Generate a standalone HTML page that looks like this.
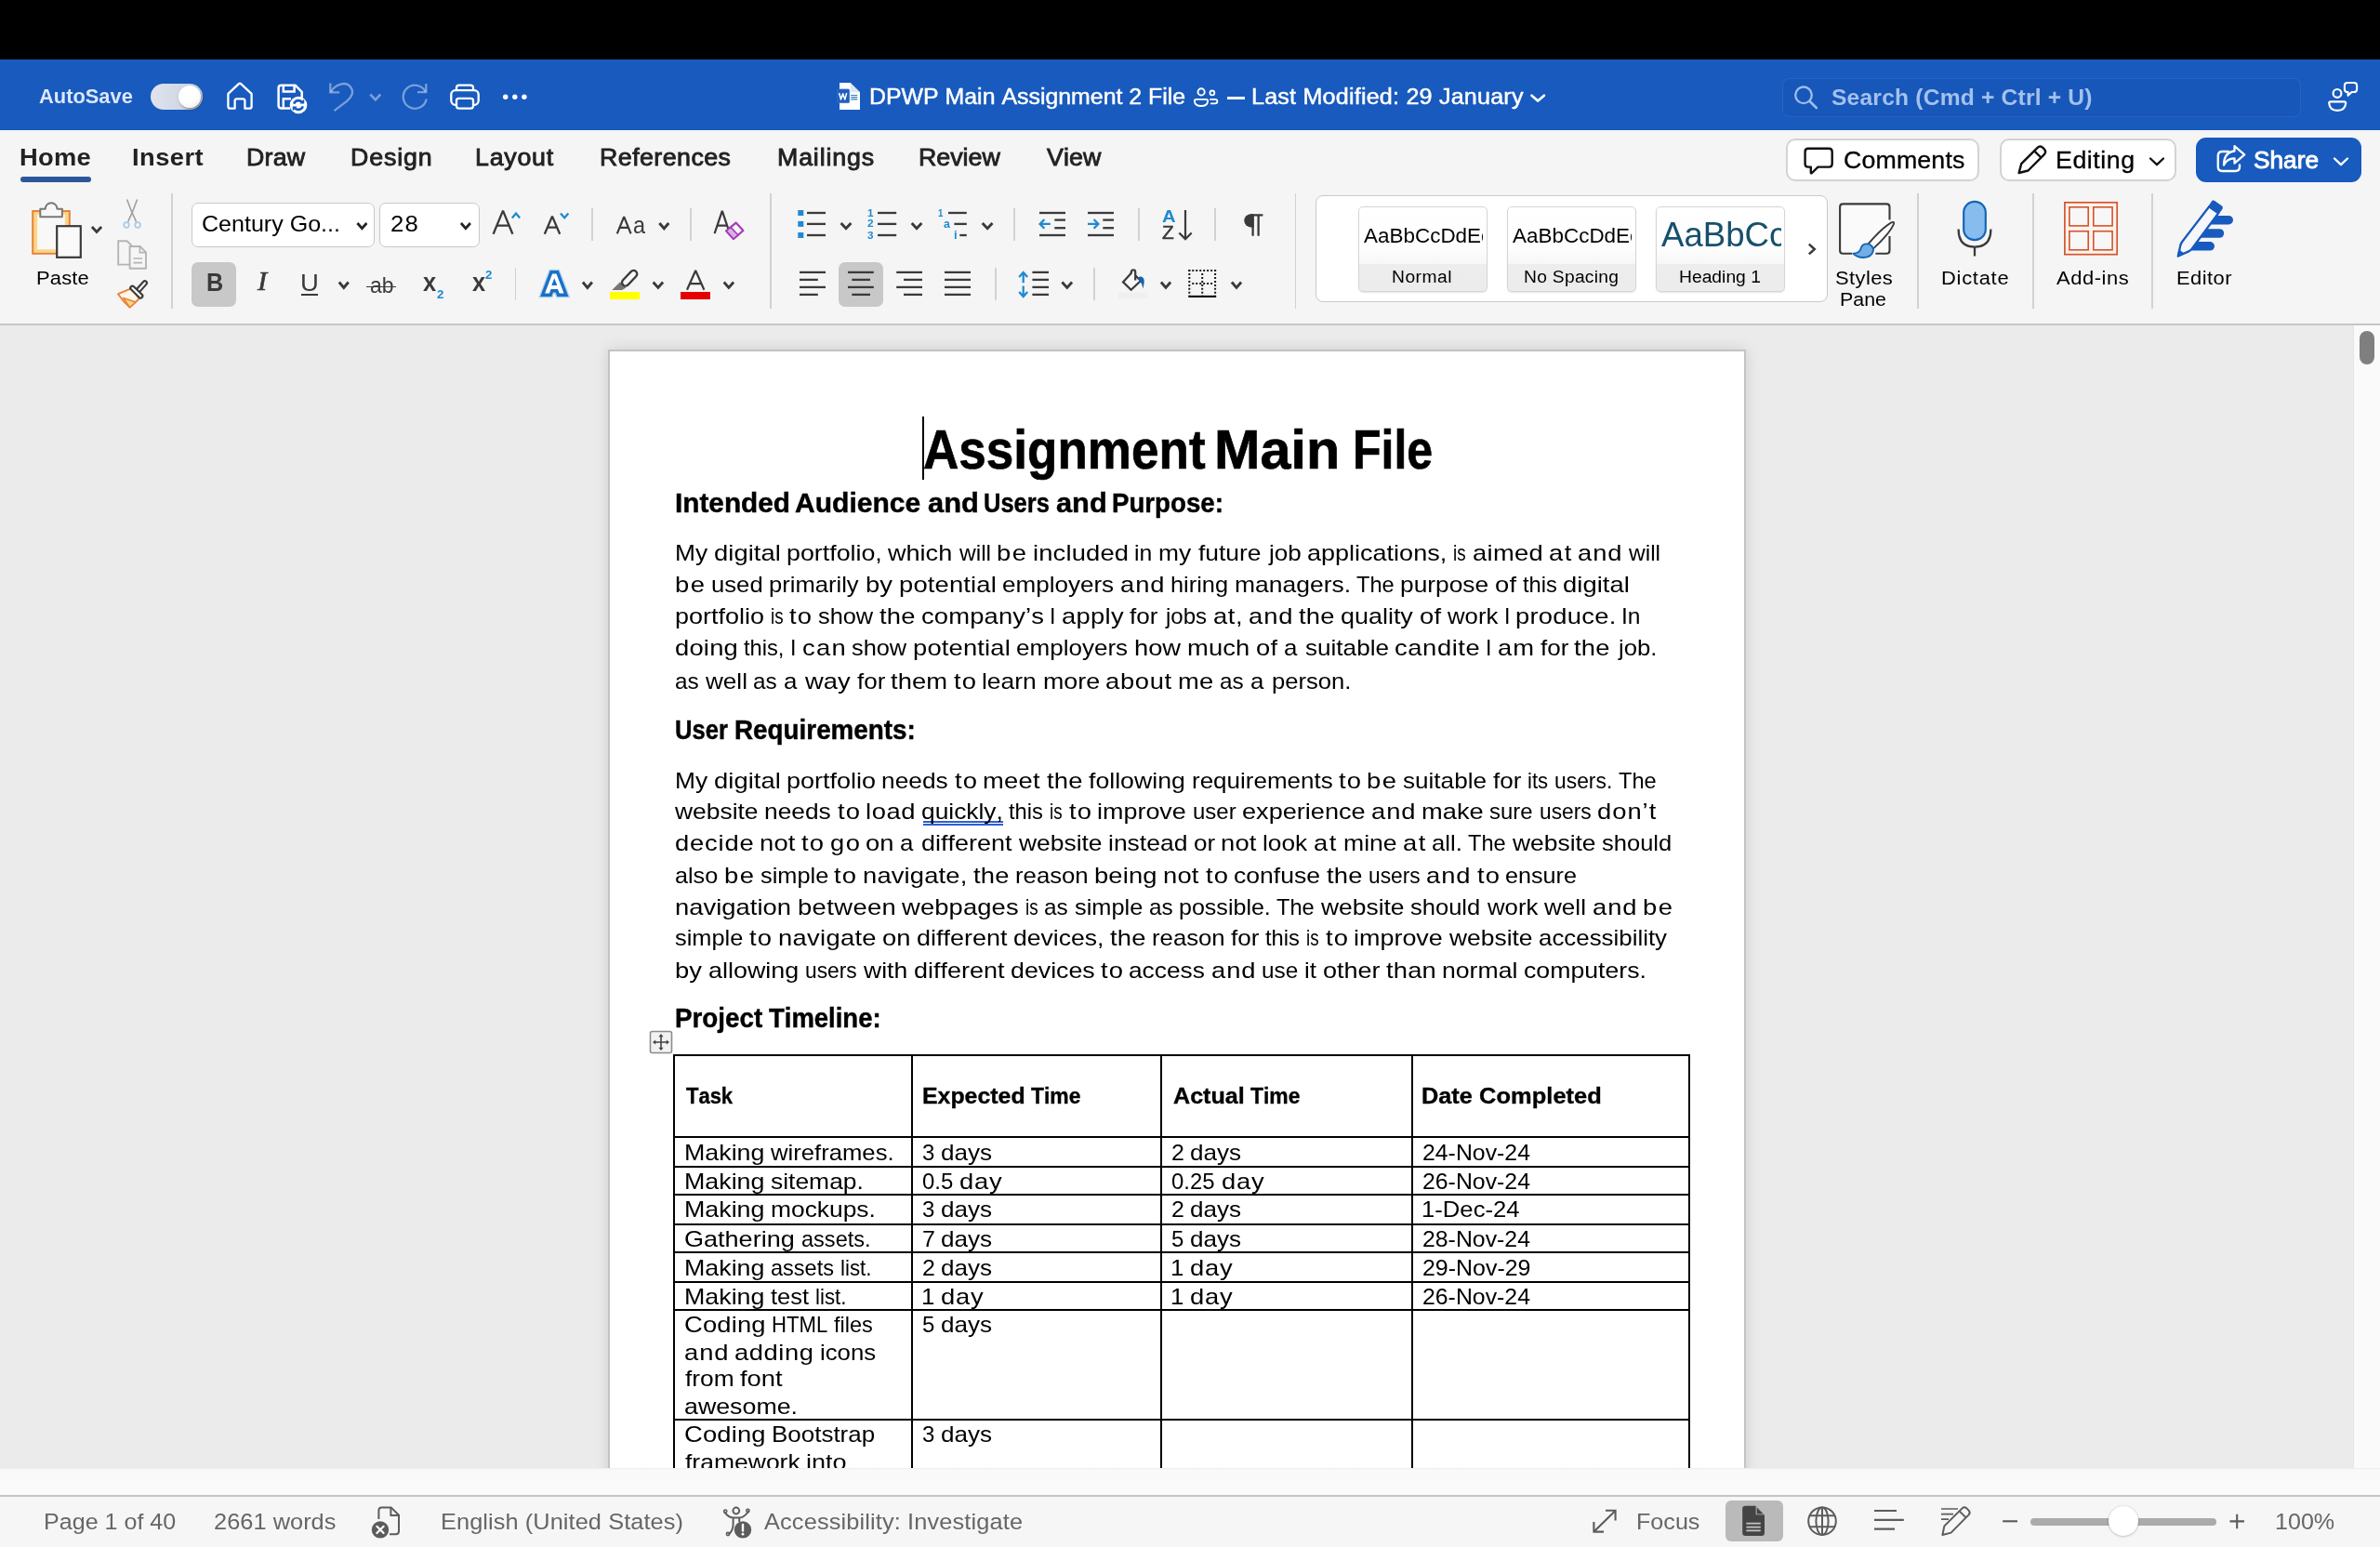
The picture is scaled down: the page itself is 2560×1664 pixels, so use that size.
<!DOCTYPE html>
<html lang="en"><head><meta charset="utf-8"><title>DPWP Main Assignment 2 File</title>
<style>
html,body{margin:0;padding:0}
body{width:2560px;height:1664px;position:relative;overflow:hidden;background:#ebebeb;font-family:"Liberation Sans",sans-serif}
svg.ov{position:absolute;left:0;top:0}
#app{position:absolute;left:0;top:0;width:2560px;height:1664px;overflow:hidden;background:#ebebeb;will-change:transform}
</style></head><body>
<div id="app">
<div style="position:absolute;left:0px;top:0px;width:2560px;height:64px;background:#000"></div>
<div style="position:absolute;left:0px;top:64px;width:2560px;height:76px;background:#185abd"></div>
<div style="position:absolute;left:0px;top:140px;width:2560px;height:208px;background:#f5f5f5"></div>
<div style="position:absolute;left:0px;top:348px;width:2560px;height:2px;background:#c6c6c6"></div>
<div style="position:absolute;left:2531px;top:350px;width:29px;height:1229px;background:#fafafa;border-left:1px solid #e4e4e4;box-sizing:border-box"></div>
<div style="position:absolute;left:2538px;top:356px;width:16px;height:36px;background:#7f7f7f;border-radius:8px"></div>
<div style="position:absolute;left:654px;top:376px;width:1224px;height:1232px;background:#fff;border:2px solid #c3c3c3;box-sizing:border-box;box-shadow:0 0 14px rgba(0,0,0,0.13)"></div>
<div style="position:absolute;left:162px;top:90px;width:56px;height:28px;border-radius:14px;background:linear-gradient(90deg,#dfe3ec,#d0d8e5 60%,#c9d2e0)"></div>
<div style="position:absolute;left:192px;top:92.3px;width:24.2px;height:24.2px;border-radius:12.1px;background:radial-gradient(circle at 35% 30%,#ffffff 45%,#ececec);box-shadow:1px 1.5px 2.5px rgba(70,50,40,0.5)"></div>
<div style="position:absolute;left:1319.6px;top:104.3px;width:19.5px;height:2.5px;background:#fff"></div>
<div style="position:absolute;left:1916.5px;top:83.5px;width:558px;height:42px;border-radius:8px;background:rgba(10,40,110,0.035);border:1px solid rgba(255,255,255,0.075);box-sizing:border-box"></div>
<div style="position:absolute;left:22px;top:190px;width:76px;height:6px;background:#2b579a;border-radius:3px"></div>
<div style="position:absolute;left:1920.5px;top:148.5px;width:208px;height:46px;background:#fff;border:2px solid #d3d3d3;border-radius:10px;box-sizing:border-box"></div>
<div style="position:absolute;left:2150.5px;top:148.5px;width:190.7px;height:46px;background:#fff;border:2px solid #d3d3d3;border-radius:10px;box-sizing:border-box"></div>
<div style="position:absolute;left:2362.2px;top:148px;width:178px;height:47.5px;background:#185abd;border-radius:11px"></div>
<div style="position:absolute;left:184.2px;top:208px;width:1.6px;height:124px;background:#d2d2d2"></div>
<div style="position:absolute;left:206.4px;top:218px;width:196.2px;height:47.5px;background:#fff;border:1.5px solid #c8c8c8;border-radius:7px;box-sizing:border-box"></div>
<div style="position:absolute;left:408.4px;top:218px;width:107.2px;height:47.5px;background:#fff;border:1.5px solid #c8c8c8;border-radius:7px;box-sizing:border-box"></div>
<div style="position:absolute;left:636.2px;top:224.4px;width:1.6px;height:34.79999999999998px;background:#d2d2d2"></div>
<div style="position:absolute;left:742.1px;top:224.4px;width:1.6px;height:34.79999999999998px;background:#d2d2d2"></div>
<div style="position:absolute;left:206.4px;top:282.4px;width:47.4px;height:47.4px;background:#c8c8c8;border-radius:7px"></div>
<div style="position:absolute;left:324px;top:315.7px;width:18px;height:2.2px;background:#3a3a3a"></div>
<div style="position:absolute;left:393.8px;top:307.6px;width:31.8px;height:1.9px;background:#3a3a3a"></div>
<div style="position:absolute;left:553.8000000000001px;top:288.2px;width:1.6px;height:35.30000000000001px;background:#d2d2d2"></div>
<div style="position:absolute;left:655.8px;top:314px;width:32.2px;height:7.8px;background:#ffff00"></div>
<div style="position:absolute;left:731.9px;top:314px;width:32px;height:7.8px;background:#e60000"></div>
<div style="position:absolute;left:828.2px;top:208px;width:1.6px;height:124px;background:#d2d2d2"></div>
<div style="position:absolute;left:1090.0px;top:224.4px;width:1.6px;height:34.79999999999998px;background:#d2d2d2"></div>
<div style="position:absolute;left:1224.1000000000001px;top:224.4px;width:1.6px;height:34.79999999999998px;background:#d2d2d2"></div>
<div style="position:absolute;left:1306.2px;top:224.4px;width:1.6px;height:34.79999999999998px;background:#d2d2d2"></div>
<div style="position:absolute;left:1392.5px;top:208px;width:1.6px;height:124px;background:#d2d2d2"></div>
<div style="position:absolute;left:902px;top:282.4px;width:48px;height:47.4px;background:#c8c8c8;border-radius:7px"></div>
<div style="position:absolute;left:1070.2px;top:288.2px;width:1.6px;height:35.30000000000001px;background:#d2d2d2"></div>
<div style="position:absolute;left:1176.2px;top:288.2px;width:1.6px;height:35.30000000000001px;background:#d2d2d2"></div>
<div style="position:absolute;left:1202.5px;top:314.8px;width:31.6px;height:6.2px;background:#efefef"></div>
<div style="position:absolute;left:1414.5px;top:210.4px;width:551px;height:114.8px;background:#fff;border:1.5px solid #c9c9c9;border-radius:8px;box-sizing:border-box"></div>
<div style="position:absolute;left:1460.5px;top:222.4px;width:139.2px;height:92px;border:1.4px solid #d6d6d6;border-radius:5px;box-sizing:border-box;overflow:hidden;background:linear-gradient(#ffffff 0,#fdfdfd 44px,#f7f7f7 61px,#ededed 61px,#ececec 100%);box-shadow:0 1px 1.5px rgba(0,0,0,0.10)"></div>
<div style="position:absolute;left:1620.5px;top:222.4px;width:139.2px;height:92px;border:1.4px solid #d6d6d6;border-radius:5px;box-sizing:border-box;overflow:hidden;background:linear-gradient(#ffffff 0,#fdfdfd 44px,#f7f7f7 61px,#ededed 61px,#ececec 100%);box-shadow:0 1px 1.5px rgba(0,0,0,0.10)"></div>
<div style="position:absolute;left:1780.5px;top:222.4px;width:139.2px;height:92px;border:1.4px solid #d6d6d6;border-radius:5px;box-sizing:border-box;overflow:hidden;background:linear-gradient(#ffffff 0,#fdfdfd 44px,#f7f7f7 61px,#ededed 61px,#ececec 100%);box-shadow:0 1px 1.5px rgba(0,0,0,0.10)"></div>
<div style="position:absolute;left:2062.2px;top:208px;width:1.6px;height:124px;background:#d2d2d2"></div>
<div style="position:absolute;left:2186.2px;top:208px;width:1.6px;height:124px;background:#d2d2d2"></div>
<div style="position:absolute;left:2314.2px;top:208px;width:1.6px;height:124px;background:#d2d2d2"></div>
<div style="position:absolute;left:992px;top:448px;width:2px;height:68px;background:#000"></div>
<div style="position:absolute;left:993px;top:883px;width:86px;height:1.5px;background:#2f5fcf"></div>
<div style="position:absolute;left:993px;top:886px;width:86px;height:1.5px;background:#2f5fcf"></div>
<div style="position:absolute;left:724px;top:1134px;width:1094px;height:2px;background:#000"></div>
<div style="position:absolute;left:724px;top:1222px;width:1094px;height:2px;background:#000"></div>
<div style="position:absolute;left:724px;top:1254px;width:1094px;height:2px;background:#000"></div>
<div style="position:absolute;left:724px;top:1284px;width:1094px;height:2px;background:#000"></div>
<div style="position:absolute;left:724px;top:1316px;width:1094px;height:2px;background:#000"></div>
<div style="position:absolute;left:724px;top:1346px;width:1094px;height:2px;background:#000"></div>
<div style="position:absolute;left:724px;top:1378px;width:1094px;height:2px;background:#000"></div>
<div style="position:absolute;left:724px;top:1408px;width:1094px;height:2px;background:#000"></div>
<div style="position:absolute;left:724px;top:1526px;width:1094px;height:2px;background:#000"></div>
<div style="position:absolute;left:724px;top:1134px;width:2px;height:446px;background:#000"></div>
<div style="position:absolute;left:980px;top:1134px;width:2px;height:446px;background:#000"></div>
<div style="position:absolute;left:1248px;top:1134px;width:2px;height:446px;background:#000"></div>
<div style="position:absolute;left:1518px;top:1134px;width:2px;height:446px;background:#000"></div>
<div style="position:absolute;left:1816px;top:1134px;width:2px;height:446px;background:#000"></div>
<svg class="ov" width="2560" height="1664" viewBox="0 0 2560 1664">
<path d="M245.4 100.9 L256.9 90.1 Q258 89.1 259.1 90.1 L270.6 100.9 V114.4 Q270.6 116.7 268.3 116.7 H263.4 V108.6 Q263.4 106.4 261.2 106.4 H254.8 Q252.6 106.4 252.6 108.6 V116.7 H247.7 Q245.4 116.7 245.4 114.4 Z" fill="none" stroke="#fff" stroke-width="2.3" stroke-linejoin="round"/>
<path d="M302.5 91.7 H317.5 L324.7 98.9 V113 M312 116.5 H302.5 Q299.6 116.5 299.6 113.6 V94.6 Q299.6 91.7 302.5 91.7" fill="none" stroke="#fff" stroke-width="2.5" stroke-linejoin="round"/><path d="M304.8 91.7 V98.6 H316.6 V91.7" fill="none" stroke="#fff" stroke-width="2.5"/><path d="M304.8 116.5 V106.2 H313" fill="none" stroke="#fff" stroke-width="2.5"/><circle cx="321" cy="113" r="9.3" fill="#fff"/><path d="M316.2 111.6 A5.2 5.2 0 0 1 325.3 110.2 M325.8 114.4 A5.2 5.2 0 0 1 316.7 115.8" fill="none" stroke="#185abd" stroke-width="2.6"/><path d="M327.2 106.6 v4.8 h-4.8z M314.8 119.4 v-4.8 h4.8z" fill="#185abd"/>
<path d="M355.3 89.5 V99.4 H365.2" fill="none" stroke="rgba(255,255,255,0.42)" stroke-width="2.3"/><path d="M355.8 98.9 C360.5 90.5 372 86.8 377 93.5 C381.5 99.5 377.5 105 373 108.8 L359.5 119.2" fill="none" stroke="rgba(255,255,255,0.42)" stroke-width="2.3"/>
<path d="M398.3 101.5 L403.8 107.3 L409.3 101.5" fill="none" stroke="rgba(255,255,255,0.42)" stroke-width="2.6"/>
<path d="M458.3 90 V99.2 H449" fill="none" stroke="rgba(255,255,255,0.42)" stroke-width="2.3"/><path d="M457.6 98.6 A12.6 12.6 0 1 0 458.7 106.5" fill="none" stroke="rgba(255,255,255,0.42)" stroke-width="2.3"/>
<path d="M491 97.2 V94.5 Q491 91.7 493.8 91.7 H506.2 Q509 91.7 509 94.5 V97.2" fill="none" stroke="#fff" stroke-width="2.3"/><rect x="485.3" y="97.2" width="29.4" height="15.6" rx="4.5" fill="none" stroke="#fff" stroke-width="2.3"/><rect x="491" y="105.8" width="18" height="10.8" rx="2.5" fill="#185abd" stroke="#fff" stroke-width="2.3"/>
<circle cx="543.7" cy="104.3" r="2.7" fill="#fff"/>
<circle cx="553.8" cy="104.3" r="2.7" fill="#fff"/>
<circle cx="563.9" cy="104.3" r="2.7" fill="#fff"/>
<path d="M903 89 H914.6 L925 99.2 V118.1 H903 Z" fill="#fff"/><path d="M914.6 89 V99.2 H925 Z" fill="#dde6f5"/><path d="M915.2 102.5 h7 M915.2 104.7 h7 M915.2 106.9 h7" stroke="#2f7fbf" stroke-width="1.2"/><rect x="900.7" y="96" width="12.9" height="14.6" rx="1.2" fill="#1f5dbe" stroke="#3a74cc" stroke-width="0.8"/><path d="M902.6 100 l1.9 7 l2.15 -6.2 l2.15 6.2 l1.9 -7" fill="none" stroke="#fff" stroke-width="1.5" stroke-linejoin="round"/>
<circle cx="1292.1" cy="98.9" r="3.6" fill="none" stroke="#fff" stroke-width="1.9"/><path d="M1286.8 106.9 H1297.2 Q1299.1 106.9 1299.1 108.8 Q1298.6 114 1292 114 Q1285.4 114 1284.9 108.8 Q1284.9 106.9 1286.8 106.9 Z" fill="none" stroke="#fff" stroke-width="1.9" stroke-linejoin="round"/><circle cx="1303.9" cy="99.9" r="2.4" fill="none" stroke="#fff" stroke-width="1.8"/><path d="M1302 106.9 H1306.8 Q1309.4 106.9 1309.4 109.1 Q1309.4 111.4 1306.8 111.4 H1302.8" fill="none" stroke="#fff" stroke-width="1.8" stroke-linecap="round"/>
<path d="M1647.5 102.7 L1654.2 108.6 L1660.9 102.7" fill="none" stroke="#fff" stroke-width="2.7" stroke-linecap="round" stroke-linejoin="round"/>
<circle cx="1940" cy="102.3" r="8.8" fill="none" stroke="#9fbdea" stroke-width="2.3"/><path d="M1946.4 108.8 L1953.8 116" stroke="#9fbdea" stroke-width="2.6" stroke-linecap="round"/>
<circle cx="2514" cy="100.4" r="4.4" fill="none" stroke="#fff" stroke-width="2.2"/><path d="M2507 109.3 H2521.4 Q2523.2 109.3 2523.2 111 Q2522.4 118.9 2514.2 118.9 Q2506 118.9 2505.2 111 Q2505.2 109.3 2507 109.3 Z" fill="none" stroke="#fff" stroke-width="2.2" stroke-linejoin="round"/><path d="M2525 89 H2532 Q2535.1 89 2535.1 92.1 V95.9 Q2535.1 99 2532 99 H2529.6 L2525.6 102.8 V99 H2525 Q2521.9 99 2521.9 95.9 V92.1 Q2521.9 89 2525 89 Z" fill="none" stroke="#fff" stroke-width="2.1" stroke-linejoin="round"/>
<path d="M1945 159.8 H1967.3 Q1970.7 159.8 1970.7 163.2 V176.2 Q1970.7 179.6 1967.3 179.6 H1955.5 L1949 186 Q1947.8 187 1947.8 185.5 V179.6 H1945 Q1941.6 179.6 1941.6 176.2 V163.2 Q1941.6 159.8 1945 159.8 Z" fill="none" stroke="#111" stroke-width="2.4" stroke-linejoin="round"/>
<path d="M2171.6 186 L2174.2 176.2 L2191.3 159.1 Q2194.4 156 2197.6 159.1 L2198.6 160.1 Q2201.7 163.2 2198.6 166.4 L2181.5 183.5 Z" fill="none" stroke="#111" stroke-width="2.4" stroke-linejoin="round"/><path d="M2188.2 162.3 L2195.4 169.5" fill="none" stroke="#111" stroke-width="2.4"/>
<path d="M2313 170.5 L2320 177.2 L2327 170.5" fill="none" stroke="#111" stroke-width="2.3" stroke-linecap="round" stroke-linejoin="round"/>
<path d="M2397 163 H2390.3 Q2385.8 163 2385.8 167.5 V179.5 Q2385.8 184 2390.3 184 H2404.5 Q2409 184 2409 179.5 V177.5" fill="none" stroke="#fff" stroke-width="2.4" stroke-linecap="round"/><path d="M2403.5 157.2 L2414.2 166.4 L2403.5 175.6 V170.3 Q2395.6 170 2392 177.5 Q2392.3 163.5 2403.5 162.5 Z" fill="none" stroke="#fff" stroke-width="2.3" stroke-linejoin="round"/>
<path d="M2511 170.5 L2518 177.2 L2525 170.5" fill="none" stroke="#fff" stroke-width="2.4" stroke-linecap="round" stroke-linejoin="round"/>
<rect x="35.2" y="227" width="39.6" height="45.8" fill="#fbd68a" stroke="#e8833a" stroke-width="2"/><rect x="40.2" y="231" width="29.6" height="37.2" fill="#f8f8f8"/><path d="M43.3 233.2 V224.8 H48.7 A6.4 6.6 0 0 1 61.5 224.8 H66.9 V233.2 Z" fill="#f7f7f7" stroke="#787878" stroke-width="2" stroke-linejoin="round"/><rect x="61.2" y="243.2" width="25.6" height="33.6" fill="#fafafa" stroke="#3a3a3a" stroke-width="2.2"/>
<path d="M98.9 244.0 L104.0 249.4 L109.1 244.0" fill="none" stroke="#3a3a3a" stroke-width="2.9" stroke-linejoin="miter"/>
<path d="M136.6 214.4 Q140.5 226 146.6 238.6 M147.6 214.4 Q143.7 226 137.6 238.6" stroke="#a0a0a0" stroke-width="1.6" fill="none"/><circle cx="136" cy="242" r="2.8" fill="none" stroke="#a9cbea" stroke-width="1.8"/><circle cx="148.1" cy="242" r="2.8" fill="none" stroke="#a9cbea" stroke-width="1.8"/>
<path d="M139.5 284.6 H127.2 V259.2 H136.5 L141.6 264" fill="none" stroke="#b4b4b4" stroke-width="1.9"/><path d="M139.6 265 H150.6 L157 271.4 V288.8 H139.6 Z" fill="#f5f5f5" stroke="#b4b4b4" stroke-width="1.9" stroke-linejoin="round"/><path d="M150.4 265.4 V271.6 H156.6" fill="none" stroke="#b4b4b4" stroke-width="1.7"/><path d="M143.5 278 H153 M143.5 282.6 H153" stroke="#b4b4b4" stroke-width="1.7"/>
<path d="M141.6 310.2 L127 316.2 Q132.4 324.4 139.6 330.6 L149.8 321.2 Z" fill="#fff6e6" stroke="#e8833a" stroke-width="1.9" stroke-linejoin="round"/><path d="M132.6 320.4 L146 325 L139.6 330.6 Z" fill="#fbd68a" stroke="#e8833a" stroke-width="1.6" stroke-linejoin="round"/><path d="M148.6 312.4 L155.8 304.4" stroke="#3a3a3a" stroke-width="6.4" stroke-linecap="round" fill="none"/><path d="M148.6 312.4 L155.8 304.4" stroke="#f7f7f7" stroke-width="2.2" stroke-linecap="round" fill="none"/><path d="M142.4 309.8 L151.2 318.4" stroke="#3a3a3a" stroke-width="6.4" stroke-linecap="round" fill="none"/><path d="M142.4 309.8 L151.2 318.4" stroke="#f7f7f7" stroke-width="2.2" stroke-linecap="round" fill="none"/>
<path d="M384.4 240.0 L389.4 245.7 L394.4 240.0" fill="none" stroke="#222" stroke-width="2.7" stroke-linejoin="miter"/>
<path d="M495.9 240.0 L500.9 245.7 L505.9 240.0" fill="none" stroke="#222" stroke-width="2.7" stroke-linejoin="miter"/>
<path d="M530.6 251.8 L541 226.6 L551.4 251.8 M534.4 242.6 H547.6" fill="none" stroke="#3a3a3a" stroke-width="2.3" stroke-linejoin="bevel"/><path d="M550.8 234.4 L555 229.6 L559.2 234.4" fill="none" stroke="#1f8ad0" stroke-width="2.3"/>
<path d="M585.8 251.8 L594 232.6 L602.2 251.8 M588.8 244.6 H599.2" fill="none" stroke="#3a3a3a" stroke-width="2.3" stroke-linejoin="bevel"/><path d="M603 229.4 L607.2 234.2 L611.4 229.4" fill="none" stroke="#1f8ad0" stroke-width="2.3"/>
<path d="M663.8 251.3 L671.2 233.2 L678.6 251.3 M666.4 244.9 H676" fill="none" stroke="#3a3a3a" stroke-width="2.2" stroke-linejoin="bevel"/>
<path d="M709.3 240.0 L714.3 245.7 L719.3 240.0" fill="none" stroke="#3a3a3a" stroke-width="2.9" stroke-linejoin="miter"/>
<path d="M768.6 251.2 L776.8 226.8 L785 251.2 M771.6 242.6 H782" fill="none" stroke="#3a3a3a" stroke-width="2.2" stroke-linejoin="bevel"/><path d="M781.2 248.4 L791.6 239.6 L799.4 248 L789 257 Z" fill="#f5f5f5" stroke="#a43cb8" stroke-width="2.2" stroke-linejoin="round"/><path d="M781.2 248.4 L786 244.4 L793.8 252.8 L789 257 Z" fill="#dcaee6" stroke="#a43cb8" stroke-width="1.6" stroke-linejoin="round"/>
<path d="M364.8 303.5 L369.8 309.4 L374.8 303.5" fill="none" stroke="#3a3a3a" stroke-width="2.9" stroke-linejoin="miter"/>
<path d="M594.1 294.4 H598.5 L606.5 315.6 H601.7 L600 311 H592.6 L590.9 315.6 H586.1 Z" fill="none" stroke="#a9d0f1" stroke-width="9.4" stroke-linejoin="miter"/><path d="M594.1 294.4 H598.5 L606.5 315.6 H601.7 L600 311 H592.6 L590.9 315.6 H586.1 Z" fill="#1a6fc4" stroke="#1a6fc4" stroke-width="6.8" stroke-linejoin="miter"/><path d="M594.1 294.4 H598.5 L606.5 315.6 H601.7 L600 311 H592.6 L590.9 315.6 H586.1 Z M596.3 299.2 L599.3 307 H593.3 Z" fill="#fff" fill-rule="evenodd"/>
<path d="M626.9 303.5 L631.9 309.4 L636.9 303.5" fill="none" stroke="#3a3a3a" stroke-width="2.9" stroke-linejoin="miter"/>
<path d="M667 303.2 L673.4 309.4 L669 311.9 L658.3 311.9 Z" fill="#757575"/><path d="M672.8 303.8 L681.5 294.7" stroke="#3a3a3a" stroke-width="9.8" stroke-linecap="round" fill="none"/><path d="M672.8 303.8 L681.5 294.7" stroke="#f8f8f8" stroke-width="5.2" stroke-linecap="round" fill="none"/>
<path d="M702.6 303.5 L707.9 309.4 L713.1 303.5" fill="none" stroke="#3a3a3a" stroke-width="2.9" stroke-linejoin="miter"/>
<path d="M739 311.8 L748.2 291 L757.4 311.8 M742 305.2 H754.4" fill="none" stroke="#3a3a3a" stroke-width="2.2" stroke-linejoin="bevel"/>
<path d="M778.7 303.5 L783.9 309.4 L789.1 303.5" fill="none" stroke="#3a3a3a" stroke-width="2.9" stroke-linejoin="miter"/>
<rect x="858.3" y="226" width="6" height="6" fill="#1f8ad0"/><path d="M868 229H888" stroke="#3a3a3a" stroke-width="2.3" fill="none"/>
<rect x="858.3" y="237.9" width="6" height="6" fill="#1f8ad0"/><path d="M868 240.9H888" stroke="#3a3a3a" stroke-width="2.3" fill="none"/>
<rect x="858.3" y="250" width="6" height="6" fill="#1f8ad0"/><path d="M868 253H888" stroke="#3a3a3a" stroke-width="2.3" fill="none"/>
<path d="M904.6 240.0 L910.0 245.7 L915.4 240.0" fill="none" stroke="#3a3a3a" stroke-width="2.9" stroke-linejoin="miter"/>
<path d="M944 229H964.2" stroke="#3a3a3a" stroke-width="2.3" fill="none"/>
<path d="M944 240.9H964.2" stroke="#3a3a3a" stroke-width="2.3" fill="none"/>
<path d="M944 253H964.2" stroke="#3a3a3a" stroke-width="2.3" fill="none"/>
<path d="M980.7 240.0 L986.0 245.7 L991.4 240.0" fill="none" stroke="#3a3a3a" stroke-width="2.9" stroke-linejoin="miter"/>
<path d="M1020 229H1039.8" stroke="#3a3a3a" stroke-width="2.3" fill="none"/><path d="M1026.4 240.9H1039.8" stroke="#3a3a3a" stroke-width="2.3" fill="none"/><path d="M1032.3 253H1039.8" stroke="#3a3a3a" stroke-width="2.3" fill="none"/>
<path d="M1056.7 240.0 L1062.1 245.7 L1067.5 240.0" fill="none" stroke="#3a3a3a" stroke-width="2.9" stroke-linejoin="miter"/>
<path d="M1118 229H1146" stroke="#3a3a3a" stroke-width="2.3" fill="none"/><path d="M1118 253H1146" stroke="#3a3a3a" stroke-width="2.3" fill="none"/><path d="M1134.3 236.6H1146" stroke="#3a3a3a" stroke-width="2.3" fill="none"/><path d="M1134.3 245.2H1146" stroke="#3a3a3a" stroke-width="2.3" fill="none"/>
<path d="M1118.6 240.9 H1129.8 M1123.4 236 L1118.6 240.9 L1123.4 245.8" fill="none" stroke="#1f8ad0" stroke-width="2.3"/>
<path d="M1170 229H1198" stroke="#3a3a3a" stroke-width="2.3" fill="none"/><path d="M1170 253H1198" stroke="#3a3a3a" stroke-width="2.3" fill="none"/><path d="M1186.3 236.6H1198" stroke="#3a3a3a" stroke-width="2.3" fill="none"/><path d="M1186.3 245.2H1198" stroke="#3a3a3a" stroke-width="2.3" fill="none"/>
<path d="M1170 240.9 H1181.4 M1176.6 236 L1181.4 240.9 L1176.6 245.8" fill="none" stroke="#1f8ad0" stroke-width="2.3"/>
<path d="M1275 226 V256.6 M1268.3 250.4 L1275 257.2 L1281.7 250.4" fill="none" stroke="#3a3a3a" stroke-width="2.2"/>
<path d="M1348.6 230.2 H1345.4 A7.1 7.1 0 0 0 1345.4 244.4 H1348.6 Z" fill="#3a3a3a"/><path d="M1345 231.3 H1358.4 M1347.6 231 V253.8 M1353.6 231 V253.8" fill="none" stroke="#3a3a3a" stroke-width="2.3"/>
<path d="M860 292.9H888" stroke="#3a3a3a" stroke-width="2.3" fill="none"/><path d="M860 300.9H879.8" stroke="#3a3a3a" stroke-width="2.3" fill="none"/><path d="M860 308.9H888" stroke="#3a3a3a" stroke-width="2.3" fill="none"/><path d="M860 316.9H879.8" stroke="#3a3a3a" stroke-width="2.3" fill="none"/>
<path d="M912 292.9H939.8" stroke="#3a3a3a" stroke-width="2.3" fill="none"/><path d="M916.3 300.9H936" stroke="#3a3a3a" stroke-width="2.3" fill="none"/><path d="M912 308.9H939.8" stroke="#3a3a3a" stroke-width="2.3" fill="none"/><path d="M916.3 316.9H936" stroke="#3a3a3a" stroke-width="2.3" fill="none"/>
<path d="M964.2 292.9H992" stroke="#3a3a3a" stroke-width="2.3" fill="none"/><path d="M972 300.9H992" stroke="#3a3a3a" stroke-width="2.3" fill="none"/><path d="M964.2 308.9H992" stroke="#3a3a3a" stroke-width="2.3" fill="none"/><path d="M972 316.9H992" stroke="#3a3a3a" stroke-width="2.3" fill="none"/>
<path d="M1016 292.9H1044" stroke="#3a3a3a" stroke-width="2.3" fill="none"/><path d="M1016 300.9H1044" stroke="#3a3a3a" stroke-width="2.3" fill="none"/><path d="M1016 308.9H1044" stroke="#3a3a3a" stroke-width="2.3" fill="none"/><path d="M1016 316.9H1044" stroke="#3a3a3a" stroke-width="2.3" fill="none"/>
<path d="M1100.7 293.4 V304.2 M1100.7 307.6 V318.6 M1096.2 298 L1100.7 293 L1105.2 298 M1096.2 314 L1100.7 319 L1105.2 314" fill="none" stroke="#1f8ad0" stroke-width="2.3"/>
<path d="M1110.4 292.9H1128" stroke="#3a3a3a" stroke-width="2.3" fill="none"/><path d="M1110.4 300.9H1128" stroke="#3a3a3a" stroke-width="2.3" fill="none"/><path d="M1110.4 308.9H1128" stroke="#3a3a3a" stroke-width="2.3" fill="none"/><path d="M1110.4 316.9H1128" stroke="#3a3a3a" stroke-width="2.3" fill="none"/>
<path d="M1142.4 303.5 L1147.8 309.4 L1153.1 303.5" fill="none" stroke="#3a3a3a" stroke-width="2.9" stroke-linejoin="miter"/>
<path d="M1216.8 293.8 L1208 303.4 L1216.6 311.8 L1227 302 L1221.2 296.4" fill="#f8f8f8" stroke="#3a3a3a" stroke-width="2.2" stroke-linejoin="miter"/><path d="M1216.8 294.6 V292.6 A2.2 2.2 0 0 1 1221.2 292.6 V301.4" fill="none" stroke="#3a3a3a" stroke-width="2.2"/><path d="M1223.8 299.6 Q1224.6 297.2 1227.4 297.6 Q1231.4 298.6 1230.6 304.4 Q1230.2 308 1229.4 310.6 Q1228.6 304.6 1225.6 302.2 Z" fill="#1565a8"/>
<path d="M1248.9 303.5 L1254.0 309.4 L1259.1 303.5" fill="none" stroke="#3a3a3a" stroke-width="2.9" stroke-linejoin="miter"/>
<path d="M1278.3 291 H1308.2 M1282.27 304.9 H1304.3" fill="none" stroke="#1a1a1a" stroke-width="2" stroke-dasharray="2 1.97"/><path d="M1279.3 290 V318 M1293.2 293.97 V318 M1307.1 290 V318" fill="none" stroke="#1a1a1a" stroke-width="2" stroke-dasharray="2 1.97"/><path d="M1278.3 318.9 H1308.2" stroke="#000" stroke-width="2.1"/>
<path d="M1324.9 303.5 L1330.0 309.4 L1335.1 303.5" fill="none" stroke="#3a3a3a" stroke-width="2.9" stroke-linejoin="miter"/>
<path d="M1945.8 262.6 L1951.8 268 L1945.8 273.4" fill="none" stroke="#3a3a3a" stroke-width="2.5"/>
<rect x="1979.1" y="219.4" width="53.4" height="53.4" rx="3.6" fill="#fafafa"/><path d="M1992 272.8 H1982.4 Q1979.1 272.8 1979.1 269.5 V222.7 Q1979.1 219.4 1982.4 219.4 H2029.2 Q2032.5 219.4 2032.5 222.7 V236.4 M2032.5 254 V269.5 Q2032.5 272.8 2029.2 272.8 H2017.4" fill="none" stroke="#3a3a3a" stroke-width="2.1"/><path d="M2009.4 262.6 Q2024.4 245 2034.4 239.4 Q2038 237.8 2036.8 241.4 Q2032.2 251.6 2015 267.4" fill="#fafafa" stroke="#3a3a3a" stroke-width="1.9" stroke-linejoin="round"/><path d="M1993.2 272.6 Q2000.4 272.6 2001.8 266.6 Q2003.4 261.8 2008.8 262.4 Q2015 263.8 2015 269.4 Q2013.6 276.6 2004.6 277 Q1997.4 277 1993.2 272.6 Z" fill="#74aee6" stroke="#1565b5" stroke-width="1.9" stroke-linejoin="round"/>
<rect x="2112.2" y="216.8" width="23.6" height="41.4" rx="11.8" fill="#86bdee" stroke="#1565b5" stroke-width="2.2"/><path d="M2106.6 246.6 Q2106.6 265.6 2124 265.6 Q2141.4 265.6 2141.4 246.6 M2124 265.8 V275.6" fill="none" stroke="#3a3a3a" stroke-width="2.3"/>
<rect x="2220.9" y="217.8" width="56.3" height="55.9" fill="#fdf2ec" stroke="#d4532d" stroke-width="1.7"/><rect x="2225.9" y="222.8" width="20.3" height="20.1" fill="#f7f7f7" stroke="#d4532d" stroke-width="1.6"/><rect x="2225.9" y="248.7" width="20.3" height="20.1" fill="#f7f7f7" stroke="#d4532d" stroke-width="1.6"/><rect x="2251.8" y="222.8" width="20.3" height="20.1" fill="#f7f7f7" stroke="#d4532d" stroke-width="1.6"/><rect x="2251.8" y="248.7" width="20.3" height="20.1" fill="#f7f7f7" stroke="#d4532d" stroke-width="1.6"/>
<path d="M2374 236.7 H2397.2 M2366 251 H2387.4 M2357 264.8 H2377.2" stroke="#185abd" stroke-width="9.6" stroke-linecap="round" fill="none"/><path d="M2342.8 275.4 L2345.2 264.4 Q2345.8 262 2347.2 260 L2376.2 222.2 L2386.2 229.2 L2357.6 267.6 Q2356 269.6 2353.8 270.6 Z" fill="#f5f7fb" stroke="#185abd" stroke-width="2.3" stroke-linejoin="round"/><path d="M2376.2 222.2 L2379.6 217.2 Q2380.4 216 2381.6 216.8 L2389.4 222.4 Q2390.4 223.2 2389.6 224.4 L2386.2 229.2 Z" fill="#185abd" stroke="#185abd" stroke-width="2" stroke-linejoin="round"/><path d="M2342.6 275.8 L2344 269.4 L2348.4 272.8 Z" fill="#185abd" stroke="#185abd" stroke-width="1.6" stroke-linejoin="round"/>
<rect x="699.5" y="1109.5" width="23" height="23" rx="2" fill="#f2f2f2" stroke="#8c8c8c" stroke-width="1.6"/><path d="M711 1113.5V1128.5M703.5 1121H718.5" stroke="#444" stroke-width="1.6" fill="none"/><path d="M711 1112l-2.6 3.2h5.2zM711 1130l-2.6-3.2h5.2zM702 1121l3.2-2.6v5.2zM720 1121l-3.2-2.6v5.2z" fill="#444"/>
</svg>
<span style="position:absolute;left:42.16px;top:93.80px;font:bold 21.5px/21.5px 'Liberation Sans', sans-serif;color:#dbe7fa;white-space:pre;font-kerning:none;letter-spacing:0.000px;transform:scaleX(1.0164);transform-origin:0 0;">AutoSave</span>
<span style="position:absolute;left:934.96px;top:92.81px;font:normal 23.5px/23.5px 'Liberation Sans', sans-serif;color:#fff;white-space:pre;font-kerning:none;letter-spacing:0.000px;transform:scaleX(1.0588);transform-origin:0 0;-webkit-text-stroke:0.45px #fff;">DPWP Main Assignment 2 File</span>
<span style="position:absolute;left:1345.54px;top:92.81px;font:normal 23.5px/23.5px 'Liberation Sans', sans-serif;color:#fff;white-space:pre;font-kerning:none;letter-spacing:0.178px;transform:scaleX(1.0700);transform-origin:0 0;-webkit-text-stroke:0.45px #fff;">Last Modified: 29 January</span>
<span style="position:absolute;left:1970.09px;top:94.13px;font:bold 23px/23px 'Liberation Sans', sans-serif;color:#a4c1ec;white-space:pre;font-kerning:none;letter-spacing:0.182px;transform:scaleX(1.0700);transform-origin:0 0;">Search (Cmd + Ctrl + U)</span>
<span style="position:absolute;left:21.37px;top:155.89px;font:bold 26px/26px 'Liberation Sans', sans-serif;color:#222;white-space:pre;font-kerning:none;letter-spacing:0.258px;transform:scaleX(1.0500);transform-origin:0 0;">Home</span>
<span style="position:absolute;left:141.87px;top:155.89px;font:bold 26px/26px 'Liberation Sans', sans-serif;color:#222;white-space:pre;font-kerning:none;letter-spacing:0.441px;transform:scaleX(1.0500);transform-origin:0 0;">Insert</span>
<span style="position:absolute;left:265.40px;top:155.89px;font:normal 26px/26px 'Liberation Sans', sans-serif;color:#222;white-space:pre;font-kerning:none;letter-spacing:0.207px;transform:scaleX(1.0300);transform-origin:0 0;-webkit-text-stroke:0.85px #222;">Draw</span>
<span style="position:absolute;left:377.10px;top:155.89px;font:normal 26px/26px 'Liberation Sans', sans-serif;color:#222;white-space:pre;font-kerning:none;letter-spacing:0.811px;transform:scaleX(1.0300);transform-origin:0 0;-webkit-text-stroke:0.85px #222;">Design</span>
<span style="position:absolute;left:511.10px;top:155.89px;font:normal 26px/26px 'Liberation Sans', sans-serif;color:#222;white-space:pre;font-kerning:none;letter-spacing:0.716px;transform:scaleX(1.0300);transform-origin:0 0;-webkit-text-stroke:0.85px #222;">Layout</span>
<span style="position:absolute;left:645.20px;top:155.89px;font:normal 26px/26px 'Liberation Sans', sans-serif;color:#222;white-space:pre;font-kerning:none;letter-spacing:0.433px;transform:scaleX(1.0300);transform-origin:0 0;-webkit-text-stroke:0.85px #222;">References</span>
<span style="position:absolute;left:835.60px;top:155.89px;font:normal 26px/26px 'Liberation Sans', sans-serif;color:#222;white-space:pre;font-kerning:none;letter-spacing:0.809px;transform:scaleX(1.0300);transform-origin:0 0;-webkit-text-stroke:0.85px #222;">Mailings</span>
<span style="position:absolute;left:987.80px;top:155.89px;font:normal 26px/26px 'Liberation Sans', sans-serif;color:#222;white-space:pre;font-kerning:none;letter-spacing:-0.015px;transform:scaleX(1.0300);transform-origin:0 0;-webkit-text-stroke:0.85px #222;">Review</span>
<span style="position:absolute;left:1125.58px;top:155.89px;font:normal 26px/26px 'Liberation Sans', sans-serif;color:#222;white-space:pre;font-kerning:none;letter-spacing:0.099px;transform:scaleX(1.0300);transform-origin:0 0;-webkit-text-stroke:0.85px #222;">View</span>
<span style="position:absolute;left:1982.64px;top:160.14px;font:normal 25px/25px 'Liberation Sans', sans-serif;color:#000;white-space:pre;font-kerning:none;letter-spacing:0.134px;transform:scaleX(1.0700);transform-origin:0 0;-webkit-text-stroke:0.3px #000;">Comments</span>
<span style="position:absolute;left:2211.21px;top:160.14px;font:normal 25px/25px 'Liberation Sans', sans-serif;color:#000;white-space:pre;font-kerning:none;letter-spacing:0.503px;transform:scaleX(1.0700);transform-origin:0 0;-webkit-text-stroke:0.3px #000;">Editing</span>
<span style="position:absolute;left:2424.01px;top:159.71px;font:normal 25.5px/25.5px 'Liberation Sans', sans-serif;color:#fff;white-space:pre;font-kerning:none;letter-spacing:0.000px;transform:scaleX(1.0281);transform-origin:0 0;-webkit-text-stroke:0.9px #fff;">Share</span>
<span style="position:absolute;left:39.20px;top:288.65px;font:normal 20.5px/20.5px 'Liberation Sans', sans-serif;color:#000;white-space:pre;font-kerning:none;letter-spacing:0.160px;transform:scaleX(1.0700);transform-origin:0 0;">Paste</span>
<span style="position:absolute;left:217.23px;top:229.28px;font:normal 24px/24px 'Liberation Sans', sans-serif;color:#000;white-space:pre;font-kerning:none;letter-spacing:0.000px;transform:scaleX(1.0437);transform-origin:0 0;">Century Go...</span>
<span style="position:absolute;left:419.71px;top:229.28px;font:normal 24px/24px 'Liberation Sans', sans-serif;color:#000;white-space:pre;font-kerning:none;letter-spacing:1.162px;transform:scaleX(1.0700);transform-origin:0 0;">28</span>
<span style="position:absolute;left:681.28px;top:229.91px;font:normal 25.5px/25.5px 'Liberation Sans', sans-serif;color:#3a3a3a;white-space:pre;font-kerning:none;letter-spacing:0.000px;transform:scaleX(0.9200);transform-origin:0 0;">a</span>
<span style="position:absolute;left:222.11px;top:289.70px;font:bold 28px/28px 'Liberation Sans', sans-serif;color:#3a3a3a;white-space:pre;font-kerning:none;letter-spacing:0.000px;transform:scaleX(0.9000);transform-origin:0 0;">B</span>
<span style="position:absolute;left:276.59px;top:289.27px;font:italic normal 28.5px/28.5px 'Liberation Serif', serif;color:#3a3a3a;white-space:pre;font-kerning:none;letter-spacing:0.000px;transform:scaleX(1.0700);transform-origin:0 0;-webkit-text-stroke:0.6px #3a3a3a;">I</span>
<span style="position:absolute;left:323.28px;top:291.19px;font:normal 26px/26px 'Liberation Sans', sans-serif;color:#3a3a3a;white-space:pre;font-kerning:none;letter-spacing:0.000px;transform:scaleX(1.0566);transform-origin:0 0;">U</span>
<span style="position:absolute;left:397.53px;top:294.86px;font:normal 24.5px/24.5px 'Liberation Sans', sans-serif;color:#3a3a3a;white-space:pre;font-kerning:none;letter-spacing:0.000px;transform:scaleX(0.9332);transform-origin:0 0;">ab</span>
<span style="position:absolute;left:455.43px;top:290.12px;font:bold 27.5px/27.5px 'Liberation Sans', sans-serif;color:#3a3a3a;white-space:pre;font-kerning:none;letter-spacing:0.000px;transform:scaleX(0.9259);transform-origin:0 0;">x</span>
<span style="position:absolute;left:469.74px;top:309.77px;font:bold 13.5px/13.5px 'Liberation Sans', sans-serif;color:#1f8ad0;white-space:pre;font-kerning:none;letter-spacing:0.000px;transform:scaleX(0.9847);transform-origin:0 0;">2</span>
<span style="position:absolute;left:507.53px;top:290.12px;font:bold 27.5px/27.5px 'Liberation Sans', sans-serif;color:#3a3a3a;white-space:pre;font-kerning:none;letter-spacing:0.000px;transform:scaleX(0.9259);transform-origin:0 0;">x</span>
<span style="position:absolute;left:521.94px;top:288.57px;font:bold 13.5px/13.5px 'Liberation Sans', sans-serif;color:#1f8ad0;white-space:pre;font-kerning:none;letter-spacing:0.000px;transform:scaleX(0.9847);transform-origin:0 0;">2</span>
<span style="position:absolute;left:933.02px;top:223.59px;font:bold 11px/11px 'Liberation Sans', sans-serif;color:#1f8ad0;white-space:pre;font-kerning:none;letter-spacing:0.000px;transform:scaleX(1.0700);transform-origin:0 0;">1</span>
<span style="position:absolute;left:933.26px;top:235.49px;font:bold 11px/11px 'Liberation Sans', sans-serif;color:#1f8ad0;white-space:pre;font-kerning:none;letter-spacing:0.000px;transform:scaleX(1.0700);transform-origin:0 0;">2</span>
<span style="position:absolute;left:933.33px;top:247.59px;font:bold 11px/11px 'Liberation Sans', sans-serif;color:#1f8ad0;white-space:pre;font-kerning:none;letter-spacing:0.000px;transform:scaleX(1.0608);transform-origin:0 0;">3</span>
<span style="position:absolute;left:1008.74px;top:224.01px;font:bold 10.5px/10.5px 'Liberation Sans', sans-serif;color:#1f8ad0;white-space:pre;font-kerning:none;letter-spacing:0.000px;transform:scaleX(0.9200);transform-origin:0 0;">1</span>
<span style="position:absolute;left:1015.04px;top:234.10px;font:bold 13px/13px 'Liberation Sans', sans-serif;color:#1f8ad0;white-space:pre;font-kerning:none;letter-spacing:0.000px;transform:scaleX(0.9522);transform-origin:0 0;">a</span>
<span style="position:absolute;left:1025.62px;top:247.14px;font:bold 12px/12px 'Liberation Sans', sans-serif;color:#1f8ad0;white-space:pre;font-kerning:none;letter-spacing:0.000px;transform:scaleX(1.0700);transform-origin:0 0;">i</span>
<span style="position:absolute;left:1249.50px;top:223.32px;font:bold 19px/19px 'Liberation Sans', sans-serif;color:#1f8ad0;white-space:pre;font-kerning:none;letter-spacing:0.000px;transform:scaleX(1.0669);transform-origin:0 0;">A</span>
<span style="position:absolute;left:1249.82px;top:241.29px;font:normal 19.5px/19.5px 'Liberation Sans', sans-serif;color:#3a3a3a;white-space:pre;font-kerning:none;letter-spacing:0.000px;transform:scaleX(1.0700);transform-origin:0 0;-webkit-text-stroke:0.5px #3a3a3a;">Z</span>
<div style="position:absolute;left:1462px;top:230px;width:133.2px;height:50px;overflow:hidden"><span style="position:absolute;left:4.76px;top:13.18px;font:normal 22px/22px 'Liberation Sans', sans-serif;color:#000;white-space:pre;font-kerning:none;letter-spacing:0.000px;transform:scaleX(1.0207);transform-origin:0 0;">AaBbCcDdEe</span></div>
<div style="position:absolute;left:1622px;top:230px;width:133.2px;height:50px;overflow:hidden"><span style="position:absolute;left:4.76px;top:13.18px;font:normal 22px/22px 'Liberation Sans', sans-serif;color:#000;white-space:pre;font-kerning:none;letter-spacing:0.000px;transform:scaleX(1.0207);transform-origin:0 0;">AaBbCcDdEe</span></div>
<div style="position:absolute;left:1782px;top:228px;width:133.6px;height:52px;overflow:hidden"><span style="position:absolute;left:5.13px;top:6.28px;font:normal 37px/37px 'Liberation Sans', sans-serif;color:#17506c;white-space:pre;font-kerning:none;letter-spacing:0.000px;transform:scaleX(0.9897);transform-origin:0 0;">AaBbCc</span></div>
<span style="position:absolute;left:1497.22px;top:288.66px;font:normal 18px/18px 'Liberation Sans', sans-serif;color:#000;white-space:pre;font-kerning:none;letter-spacing:0.467px;transform:scaleX(1.0700);transform-origin:0 0;">Normal</span>
<span style="position:absolute;left:1638.72px;top:288.66px;font:normal 18px/18px 'Liberation Sans', sans-serif;color:#000;white-space:pre;font-kerning:none;letter-spacing:0.254px;transform:scaleX(1.0700);transform-origin:0 0;">No Spacing</span>
<span style="position:absolute;left:1805.82px;top:288.66px;font:normal 18px/18px 'Liberation Sans', sans-serif;color:#000;white-space:pre;font-kerning:none;letter-spacing:0.013px;transform:scaleX(1.0700);transform-origin:0 0;">Heading 1</span>
<span style="position:absolute;left:1973.80px;top:288.55px;font:normal 20.5px/20.5px 'Liberation Sans', sans-serif;color:#000;white-space:pre;font-kerning:none;letter-spacing:0.384px;transform:scaleX(1.0700);transform-origin:0 0;">Styles</span>
<span style="position:absolute;left:1979.45px;top:312.35px;font:normal 20.5px/20.5px 'Liberation Sans', sans-serif;color:#000;white-space:pre;font-kerning:none;letter-spacing:0.000px;transform:scaleX(1.0423);transform-origin:0 0;">Pane</span>
<span style="position:absolute;left:2087.60px;top:288.55px;font:normal 20.5px/20.5px 'Liberation Sans', sans-serif;color:#000;white-space:pre;font-kerning:none;letter-spacing:0.671px;transform:scaleX(1.0700);transform-origin:0 0;">Dictate</span>
<span style="position:absolute;left:2211.76px;top:288.55px;font:normal 20.5px/20.5px 'Liberation Sans', sans-serif;color:#000;white-space:pre;font-kerning:none;letter-spacing:0.508px;transform:scaleX(1.0700);transform-origin:0 0;">Add-ins</span>
<span style="position:absolute;left:2341.20px;top:288.55px;font:normal 20.5px/20.5px 'Liberation Sans', sans-serif;color:#000;white-space:pre;font-kerning:none;letter-spacing:0.404px;transform:scaleX(1.0700);transform-origin:0 0;">Editor</span>
<span style="position:absolute;left:993.18px;top:453.63px;font:bold 59.5px/59.5px 'Liberation Sans', sans-serif;color:#000;white-space:pre;font-kerning:none;letter-spacing:0.000px;transform:scaleX(0.8915);transform-origin:0 0;-webkit-text-stroke:0.7px #000;">Assignment</span>
<span style="position:absolute;left:1306.23px;top:453.63px;font:bold 59.5px/59.5px 'Liberation Sans', sans-serif;color:#000;white-space:pre;font-kerning:none;letter-spacing:0.000px;transform:scaleX(0.9972);transform-origin:0 0;-webkit-text-stroke:0.7px #000;">Main</span>
<span style="position:absolute;left:1454.85px;top:453.63px;font:bold 59.5px/59.5px 'Liberation Sans', sans-serif;color:#000;white-space:pre;font-kerning:none;letter-spacing:0.000px;transform:scaleX(0.8406);transform-origin:0 0;-webkit-text-stroke:0.7px #000;">File</span>
<span style="position:absolute;left:725.51px;top:527.25px;font:bold 29px/29px 'Liberation Sans', sans-serif;color:#000;white-space:pre;font-kerning:none;letter-spacing:0.000px;transform:scaleX(1.0258);transform-origin:0 0;-webkit-text-stroke:0.45px #000;">Intended</span>
<span style="position:absolute;left:855.25px;top:527.25px;font:bold 29px/29px 'Liberation Sans', sans-serif;color:#000;white-space:pre;font-kerning:none;letter-spacing:0.000px;transform:scaleX(1.0356);transform-origin:0 0;-webkit-text-stroke:0.45px #000;">Audience</span>
<span style="position:absolute;left:997.50px;top:527.25px;font:bold 29px/29px 'Liberation Sans', sans-serif;color:#000;white-space:pre;font-kerning:none;letter-spacing:0.000px;transform:scaleX(1.0636);transform-origin:0 0;-webkit-text-stroke:0.45px #000;">and</span>
<span style="position:absolute;left:1057.77px;top:527.25px;font:bold 29px/29px 'Liberation Sans', sans-serif;color:#000;white-space:pre;font-kerning:none;letter-spacing:0.000px;transform:scaleX(0.8792);transform-origin:0 0;-webkit-text-stroke:0.45px #000;">Users</span>
<span style="position:absolute;left:1135.70px;top:527.25px;font:bold 29px/29px 'Liberation Sans', sans-serif;color:#000;white-space:pre;font-kerning:none;letter-spacing:0.000px;transform:scaleX(1.0616);transform-origin:0 0;-webkit-text-stroke:0.45px #000;">and</span>
<span style="position:absolute;left:1196.15px;top:527.25px;font:bold 29px/29px 'Liberation Sans', sans-serif;color:#000;white-space:pre;font-kerning:none;letter-spacing:0.000px;transform:scaleX(0.9541);transform-origin:0 0;-webkit-text-stroke:0.45px #000;">Purpose:</span>
<span style="position:absolute;left:725.64px;top:583.28px;font:normal 24px/24px 'Liberation Sans', sans-serif;color:#000;white-space:pre;font-kerning:none;letter-spacing:0.000px;transform:scaleX(1.0969);transform-origin:0 0;">My</span>
<span style="position:absolute;left:767.50px;top:583.28px;font:normal 24px/24px 'Liberation Sans', sans-serif;color:#000;white-space:pre;font-kerning:none;letter-spacing:0.044px;transform:scaleX(1.1400);transform-origin:0 0;">digital</span>
<span style="position:absolute;left:845.81px;top:583.28px;font:normal 24px/24px 'Liberation Sans', sans-serif;color:#000;white-space:pre;font-kerning:none;letter-spacing:0.000px;transform:scaleX(1.1168);transform-origin:0 0;">portfolio,</span>
<span style="position:absolute;left:955.38px;top:583.28px;font:normal 24px/24px 'Liberation Sans', sans-serif;color:#000;white-space:pre;font-kerning:none;letter-spacing:0.000px;transform:scaleX(1.1275);transform-origin:0 0;">which</span>
<span style="position:absolute;left:1031.58px;top:583.28px;font:normal 24px/24px 'Liberation Sans', sans-serif;color:#000;white-space:pre;font-kerning:none;letter-spacing:-0.000px;transform:scaleX(1.0210);transform-origin:0 0;">will</span>
<span style="position:absolute;left:1072.28px;top:583.28px;font:normal 24px/24px 'Liberation Sans', sans-serif;color:#000;white-space:pre;font-kerning:none;letter-spacing:1.434px;transform:scaleX(1.1400);transform-origin:0 0;">be</span>
<span style="position:absolute;left:1110.67px;top:583.28px;font:normal 24px/24px 'Liberation Sans', sans-serif;color:#000;white-space:pre;font-kerning:none;letter-spacing:0.136px;transform:scaleX(1.1400);transform-origin:0 0;">included</span>
<span style="position:absolute;left:1220.33px;top:583.28px;font:normal 24px/24px 'Liberation Sans', sans-serif;color:#000;white-space:pre;font-kerning:none;letter-spacing:0.000px;transform:scaleX(1.0317);transform-origin:0 0;">in</span>
<span style="position:absolute;left:1246.49px;top:583.28px;font:normal 24px/24px 'Liberation Sans', sans-serif;color:#000;white-space:pre;font-kerning:none;letter-spacing:0.000px;transform:scaleX(1.0983);transform-origin:0 0;">my</span>
<span style="position:absolute;left:1288.69px;top:583.28px;font:normal 24px/24px 'Liberation Sans', sans-serif;color:#000;white-space:pre;font-kerning:none;letter-spacing:0.000px;transform:scaleX(1.1006);transform-origin:0 0;">future</span>
<span style="position:absolute;left:1365.06px;top:583.28px;font:normal 24px/24px 'Liberation Sans', sans-serif;color:#000;white-space:pre;font-kerning:none;letter-spacing:0.000px;transform:scaleX(1.0836);transform-origin:0 0;">job</span>
<span style="position:absolute;left:1406.33px;top:583.28px;font:normal 24px/24px 'Liberation Sans', sans-serif;color:#000;white-space:pre;font-kerning:none;letter-spacing:0.000px;transform:scaleX(1.1257);transform-origin:0 0;">applications,</span>
<span style="position:absolute;left:1563.33px;top:583.28px;font:normal 24px/24px 'Liberation Sans', sans-serif;color:#000;white-space:pre;font-kerning:none;letter-spacing:0.000px;transform:scaleX(0.7833);transform-origin:0 0;">is</span>
<span style="position:absolute;left:1583.63px;top:583.28px;font:normal 24px/24px 'Liberation Sans', sans-serif;color:#000;white-space:pre;font-kerning:none;letter-spacing:0.279px;transform:scaleX(1.1400);transform-origin:0 0;">aimed</span>
<span style="position:absolute;left:1666.02px;top:583.28px;font:normal 24px/24px 'Liberation Sans', sans-serif;color:#000;white-space:pre;font-kerning:none;letter-spacing:1.432px;transform:scaleX(1.1400);transform-origin:0 0;">at</span>
<span style="position:absolute;left:1697.20px;top:583.28px;font:normal 24px/24px 'Liberation Sans', sans-serif;color:#000;white-space:pre;font-kerning:none;letter-spacing:0.820px;transform:scaleX(1.1400);transform-origin:0 0;">and</span>
<span style="position:absolute;left:1751.72px;top:583.28px;font:normal 24px/24px 'Liberation Sans', sans-serif;color:#000;white-space:pre;font-kerning:none;letter-spacing:-0.000px;transform:scaleX(1.0210);transform-origin:0 0;">will</span>
<span style="position:absolute;left:726.04px;top:617.28px;font:normal 24px/24px 'Liberation Sans', sans-serif;color:#000;white-space:pre;font-kerning:none;letter-spacing:1.434px;transform:scaleX(1.1400);transform-origin:0 0;">be</span>
<span style="position:absolute;left:764.75px;top:617.28px;font:normal 24px/24px 'Liberation Sans', sans-serif;color:#000;white-space:pre;font-kerning:none;letter-spacing:0.000px;transform:scaleX(1.0696);transform-origin:0 0;">used</span>
<span style="position:absolute;left:827.36px;top:617.28px;font:normal 24px/24px 'Liberation Sans', sans-serif;color:#000;white-space:pre;font-kerning:none;letter-spacing:0.000px;transform:scaleX(1.0659);transform-origin:0 0;">primarily</span>
<span style="position:absolute;left:930.88px;top:617.28px;font:normal 24px/24px 'Liberation Sans', sans-serif;color:#000;white-space:pre;font-kerning:none;letter-spacing:0.099px;transform:scaleX(1.1400);transform-origin:0 0;">by</span>
<span style="position:absolute;left:966.76px;top:617.28px;font:normal 24px/24px 'Liberation Sans', sans-serif;color:#000;white-space:pre;font-kerning:none;letter-spacing:0.144px;transform:scaleX(1.1400);transform-origin:0 0;">potential</span>
<span style="position:absolute;left:1077.93px;top:617.28px;font:normal 24px/24px 'Liberation Sans', sans-serif;color:#000;white-space:pre;font-kerning:none;letter-spacing:0.000px;transform:scaleX(1.0851);transform-origin:0 0;">employers</span>
<span style="position:absolute;left:1204.53px;top:617.28px;font:normal 24px/24px 'Liberation Sans', sans-serif;color:#000;white-space:pre;font-kerning:none;letter-spacing:0.820px;transform:scaleX(1.1400);transform-origin:0 0;">and</span>
<span style="position:absolute;left:1258.77px;top:617.28px;font:normal 24px/24px 'Liberation Sans', sans-serif;color:#000;white-space:pre;font-kerning:none;letter-spacing:0.000px;transform:scaleX(1.0571);transform-origin:0 0;">hiring</span>
<span style="position:absolute;left:1327.67px;top:617.28px;font:normal 24px/24px 'Liberation Sans', sans-serif;color:#000;white-space:pre;font-kerning:none;letter-spacing:0.000px;transform:scaleX(1.1027);transform-origin:0 0;">managers.</span>
<span style="position:absolute;left:1458.91px;top:617.28px;font:normal 24px/24px 'Liberation Sans', sans-serif;color:#000;white-space:pre;font-kerning:none;letter-spacing:0.000px;transform:scaleX(0.9835);transform-origin:0 0;">The</span>
<span style="position:absolute;left:1506.37px;top:617.28px;font:normal 24px/24px 'Liberation Sans', sans-serif;color:#000;white-space:pre;font-kerning:none;letter-spacing:0.000px;transform:scaleX(1.0973);transform-origin:0 0;">purpose</span>
<span style="position:absolute;left:1608.03px;top:617.28px;font:normal 24px/24px 'Liberation Sans', sans-serif;color:#000;white-space:pre;font-kerning:none;letter-spacing:0.199px;transform:scaleX(1.1400);transform-origin:0 0;">of</span>
<span style="position:absolute;left:1638.00px;top:617.28px;font:normal 24px/24px 'Liberation Sans', sans-serif;color:#000;white-space:pre;font-kerning:none;letter-spacing:0.000px;transform:scaleX(0.9881);transform-origin:0 0;">this</span>
<span style="position:absolute;left:1681.47px;top:617.28px;font:normal 24px/24px 'Liberation Sans', sans-serif;color:#000;white-space:pre;font-kerning:none;letter-spacing:0.044px;transform:scaleX(1.1400);transform-origin:0 0;">digital</span>
<span style="position:absolute;left:726.06px;top:651.38px;font:normal 24px/24px 'Liberation Sans', sans-serif;color:#000;white-space:pre;font-kerning:none;letter-spacing:-0.000px;transform:scaleX(1.1245);transform-origin:0 0;">portfolio</span>
<span style="position:absolute;left:829.05px;top:651.38px;font:normal 24px/24px 'Liberation Sans', sans-serif;color:#000;white-space:pre;font-kerning:none;letter-spacing:0.000px;transform:scaleX(0.7833);transform-origin:0 0;">is</span>
<span style="position:absolute;left:849.38px;top:651.38px;font:normal 24px/24px 'Liberation Sans', sans-serif;color:#000;white-space:pre;font-kerning:none;letter-spacing:1.019px;transform:scaleX(1.1400);transform-origin:0 0;">to</span>
<span style="position:absolute;left:880.07px;top:651.38px;font:normal 24px/24px 'Liberation Sans', sans-serif;color:#000;white-space:pre;font-kerning:none;letter-spacing:0.000px;transform:scaleX(1.0563);transform-origin:0 0;">show</span>
<span style="position:absolute;left:946.15px;top:651.38px;font:normal 24px/24px 'Liberation Sans', sans-serif;color:#000;white-space:pre;font-kerning:none;letter-spacing:0.233px;transform:scaleX(1.1400);transform-origin:0 0;">the</span>
<span style="position:absolute;left:991.14px;top:651.38px;font:normal 24px/24px 'Liberation Sans', sans-serif;color:#000;white-space:pre;font-kerning:none;letter-spacing:0.133px;transform:scaleX(1.1400);transform-origin:0 0;">company’s</span>
<span style="position:absolute;left:1129.13px;top:651.38px;font:normal 24px/24px 'Liberation Sans', sans-serif;color:#000;white-space:pre;font-kerning:none;letter-spacing:0.000px;transform:scaleX(0.9650);transform-origin:0 0;">I</span>
<span style="position:absolute;left:1141.62px;top:651.38px;font:normal 24px/24px 'Liberation Sans', sans-serif;color:#000;white-space:pre;font-kerning:none;letter-spacing:0.281px;transform:scaleX(1.1400);transform-origin:0 0;">apply</span>
<span style="position:absolute;left:1215.37px;top:651.38px;font:normal 24px/24px 'Liberation Sans', sans-serif;color:#000;white-space:pre;font-kerning:none;letter-spacing:0.000px;transform:scaleX(1.0869);transform-origin:0 0;">for</span>
<span style="position:absolute;left:1254.49px;top:651.38px;font:normal 24px/24px 'Liberation Sans', sans-serif;color:#000;white-space:pre;font-kerning:none;letter-spacing:0.000px;transform:scaleX(1.0012);transform-origin:0 0;">jobs</span>
<span style="position:absolute;left:1305.11px;top:651.38px;font:normal 24px/24px 'Liberation Sans', sans-serif;color:#000;white-space:pre;font-kerning:none;letter-spacing:0.478px;transform:scaleX(1.1400);transform-origin:0 0;">at,</span>
<span style="position:absolute;left:1342.93px;top:651.38px;font:normal 24px/24px 'Liberation Sans', sans-serif;color:#000;white-space:pre;font-kerning:none;letter-spacing:0.820px;transform:scaleX(1.1400);transform-origin:0 0;">and</span>
<span style="position:absolute;left:1397.08px;top:651.38px;font:normal 24px/24px 'Liberation Sans', sans-serif;color:#000;white-space:pre;font-kerning:none;letter-spacing:0.233px;transform:scaleX(1.1400);transform-origin:0 0;">the</span>
<span style="position:absolute;left:1442.11px;top:651.38px;font:normal 24px/24px 'Liberation Sans', sans-serif;color:#000;white-space:pre;font-kerning:none;letter-spacing:0.000px;transform:scaleX(1.1217);transform-origin:0 0;">quality</span>
<span style="position:absolute;left:1526.69px;top:651.38px;font:normal 24px/24px 'Liberation Sans', sans-serif;color:#000;white-space:pre;font-kerning:none;letter-spacing:0.199px;transform:scaleX(1.1400);transform-origin:0 0;">of</span>
<span style="position:absolute;left:1556.99px;top:651.38px;font:normal 24px/24px 'Liberation Sans', sans-serif;color:#000;white-space:pre;font-kerning:none;letter-spacing:0.000px;transform:scaleX(1.0722);transform-origin:0 0;">work</span>
<span style="position:absolute;left:1617.74px;top:651.38px;font:normal 24px/24px 'Liberation Sans', sans-serif;color:#000;white-space:pre;font-kerning:none;letter-spacing:0.000px;transform:scaleX(0.9650);transform-origin:0 0;">I</span>
<span style="position:absolute;left:1630.36px;top:651.38px;font:normal 24px/24px 'Liberation Sans', sans-serif;color:#000;white-space:pre;font-kerning:none;letter-spacing:0.238px;transform:scaleX(1.1400);transform-origin:0 0;">produce.</span>
<span style="position:absolute;left:1744.45px;top:651.38px;font:normal 24px/24px 'Liberation Sans', sans-serif;color:#000;white-space:pre;font-kerning:none;letter-spacing:0.000px;transform:scaleX(1.0240);transform-origin:0 0;">In</span>
<span style="position:absolute;left:725.93px;top:685.48px;font:normal 24px/24px 'Liberation Sans', sans-serif;color:#000;white-space:pre;font-kerning:none;letter-spacing:0.184px;transform:scaleX(1.1400);transform-origin:0 0;">doing</span>
<span style="position:absolute;left:800.40px;top:685.48px;font:normal 24px/24px 'Liberation Sans', sans-serif;color:#000;white-space:pre;font-kerning:none;letter-spacing:0.000px;transform:scaleX(0.9873);transform-origin:0 0;">this,</span>
<span style="position:absolute;left:850.08px;top:685.48px;font:normal 24px/24px 'Liberation Sans', sans-serif;color:#000;white-space:pre;font-kerning:none;letter-spacing:0.000px;transform:scaleX(0.9650);transform-origin:0 0;">I</span>
<span style="position:absolute;left:862.57px;top:685.48px;font:normal 24px/24px 'Liberation Sans', sans-serif;color:#000;white-space:pre;font-kerning:none;letter-spacing:1.099px;transform:scaleX(1.1400);transform-origin:0 0;">can</span>
<span style="position:absolute;left:916.00px;top:685.48px;font:normal 24px/24px 'Liberation Sans', sans-serif;color:#000;white-space:pre;font-kerning:none;letter-spacing:0.000px;transform:scaleX(1.0563);transform-origin:0 0;">show</span>
<span style="position:absolute;left:982.16px;top:685.48px;font:normal 24px/24px 'Liberation Sans', sans-serif;color:#000;white-space:pre;font-kerning:none;letter-spacing:0.144px;transform:scaleX(1.1400);transform-origin:0 0;">potential</span>
<span style="position:absolute;left:1093.34px;top:685.48px;font:normal 24px/24px 'Liberation Sans', sans-serif;color:#000;white-space:pre;font-kerning:none;letter-spacing:0.000px;transform:scaleX(1.0851);transform-origin:0 0;">employers</span>
<span style="position:absolute;left:1219.92px;top:685.48px;font:normal 24px/24px 'Liberation Sans', sans-serif;color:#000;white-space:pre;font-kerning:none;letter-spacing:-0.000px;transform:scaleX(1.1377);transform-origin:0 0;">how</span>
<span style="position:absolute;left:1276.95px;top:685.48px;font:normal 24px/24px 'Liberation Sans', sans-serif;color:#000;white-space:pre;font-kerning:none;letter-spacing:0.106px;transform:scaleX(1.1400);transform-origin:0 0;">much</span>
<span style="position:absolute;left:1350.82px;top:685.48px;font:normal 24px/24px 'Liberation Sans', sans-serif;color:#000;white-space:pre;font-kerning:none;letter-spacing:0.199px;transform:scaleX(1.1400);transform-origin:0 0;">of</span>
<span style="position:absolute;left:1380.87px;top:685.48px;font:normal 24px/24px 'Liberation Sans', sans-serif;color:#000;white-space:pre;font-kerning:none;letter-spacing:0.000px;transform:scaleX(1.0800);transform-origin:0 0;">a</span>
<span style="position:absolute;left:1403.95px;top:685.48px;font:normal 24px/24px 'Liberation Sans', sans-serif;color:#000;white-space:pre;font-kerning:none;letter-spacing:0.000px;transform:scaleX(1.0876);transform-origin:0 0;">suitable</span>
<span style="position:absolute;left:1500.40px;top:685.48px;font:normal 24px/24px 'Liberation Sans', sans-serif;color:#000;white-space:pre;font-kerning:none;letter-spacing:0.516px;transform:scaleX(1.1400);transform-origin:0 0;">candite</span>
<span style="position:absolute;left:1598.16px;top:685.48px;font:normal 24px/24px 'Liberation Sans', sans-serif;color:#000;white-space:pre;font-kerning:none;letter-spacing:0.000px;transform:scaleX(0.9650);transform-origin:0 0;">I</span>
<span style="position:absolute;left:1610.65px;top:685.48px;font:normal 24px/24px 'Liberation Sans', sans-serif;color:#000;white-space:pre;font-kerning:none;letter-spacing:0.862px;transform:scaleX(1.1400);transform-origin:0 0;">am</span>
<span style="position:absolute;left:1656.52px;top:685.48px;font:normal 24px/24px 'Liberation Sans', sans-serif;color:#000;white-space:pre;font-kerning:none;letter-spacing:0.000px;transform:scaleX(1.0869);transform-origin:0 0;">for</span>
<span style="position:absolute;left:1693.36px;top:685.48px;font:normal 24px/24px 'Liberation Sans', sans-serif;color:#000;white-space:pre;font-kerning:none;letter-spacing:0.233px;transform:scaleX(1.1400);transform-origin:0 0;">the</span>
<span style="position:absolute;left:1740.70px;top:685.48px;font:normal 24px/24px 'Liberation Sans', sans-serif;color:#000;white-space:pre;font-kerning:none;letter-spacing:0.000px;transform:scaleX(1.0722);transform-origin:0 0;">job.</span>
<span style="position:absolute;left:726.05px;top:721.48px;font:normal 24px/24px 'Liberation Sans', sans-serif;color:#000;white-space:pre;font-kerning:none;letter-spacing:-0.000px;transform:scaleX(1.0138);transform-origin:0 0;">as</span>
<span style="position:absolute;left:758.68px;top:721.48px;font:normal 24px/24px 'Liberation Sans', sans-serif;color:#000;white-space:pre;font-kerning:none;letter-spacing:0.000px;transform:scaleX(1.0868);transform-origin:0 0;">well</span>
<span style="position:absolute;left:810.19px;top:721.48px;font:normal 24px/24px 'Liberation Sans', sans-serif;color:#000;white-space:pre;font-kerning:none;letter-spacing:-0.000px;transform:scaleX(1.0138);transform-origin:0 0;">as</span>
<span style="position:absolute;left:842.57px;top:721.48px;font:normal 24px/24px 'Liberation Sans', sans-serif;color:#000;white-space:pre;font-kerning:none;letter-spacing:0.000px;transform:scaleX(1.0800);transform-origin:0 0;">a</span>
<span style="position:absolute;left:865.86px;top:721.48px;font:normal 24px/24px 'Liberation Sans', sans-serif;color:#000;white-space:pre;font-kerning:none;letter-spacing:0.013px;transform:scaleX(1.1400);transform-origin:0 0;">way</span>
<span style="position:absolute;left:921.61px;top:721.48px;font:normal 24px/24px 'Liberation Sans', sans-serif;color:#000;white-space:pre;font-kerning:none;letter-spacing:0.000px;transform:scaleX(1.0869);transform-origin:0 0;">for</span>
<span style="position:absolute;left:958.46px;top:721.48px;font:normal 24px/24px 'Liberation Sans', sans-serif;color:#000;white-space:pre;font-kerning:none;letter-spacing:0.035px;transform:scaleX(1.1400);transform-origin:0 0;">them</span>
<span style="position:absolute;left:1025.99px;top:721.48px;font:normal 24px/24px 'Liberation Sans', sans-serif;color:#000;white-space:pre;font-kerning:none;letter-spacing:1.019px;transform:scaleX(1.1400);transform-origin:0 0;">to</span>
<span style="position:absolute;left:1056.40px;top:721.48px;font:normal 24px/24px 'Liberation Sans', sans-serif;color:#000;white-space:pre;font-kerning:none;letter-spacing:0.000px;transform:scaleX(1.1003);transform-origin:0 0;">learn</span>
<span style="position:absolute;left:1121.87px;top:721.48px;font:normal 24px/24px 'Liberation Sans', sans-serif;color:#000;white-space:pre;font-kerning:none;letter-spacing:0.000px;transform:scaleX(1.1183);transform-origin:0 0;">more</span>
<span style="position:absolute;left:1189.48px;top:721.48px;font:normal 24px/24px 'Liberation Sans', sans-serif;color:#000;white-space:pre;font-kerning:none;letter-spacing:0.584px;transform:scaleX(1.1400);transform-origin:0 0;">about</span>
<span style="position:absolute;left:1267.40px;top:721.48px;font:normal 24px/24px 'Liberation Sans', sans-serif;color:#000;white-space:pre;font-kerning:none;letter-spacing:0.226px;transform:scaleX(1.1400);transform-origin:0 0;">me</span>
<span style="position:absolute;left:1312.22px;top:721.48px;font:normal 24px/24px 'Liberation Sans', sans-serif;color:#000;white-space:pre;font-kerning:none;letter-spacing:0.000px;transform:scaleX(1.0138);transform-origin:0 0;">as</span>
<span style="position:absolute;left:1344.61px;top:721.48px;font:normal 24px/24px 'Liberation Sans', sans-serif;color:#000;white-space:pre;font-kerning:none;letter-spacing:0.000px;transform:scaleX(1.0800);transform-origin:0 0;">a</span>
<span style="position:absolute;left:1367.72px;top:721.48px;font:normal 24px/24px 'Liberation Sans', sans-serif;color:#000;white-space:pre;font-kerning:none;letter-spacing:0.000px;transform:scaleX(1.0680);transform-origin:0 0;">person.</span>
<span style="position:absolute;left:725.97px;top:771.05px;font:bold 29px/29px 'Liberation Sans', sans-serif;color:#000;white-space:pre;font-kerning:none;letter-spacing:0.000px;transform:scaleX(0.8812);transform-origin:0 0;-webkit-text-stroke:0.45px #000;">User</span>
<span style="position:absolute;left:790.24px;top:771.05px;font:bold 29px/29px 'Liberation Sans', sans-serif;color:#000;white-space:pre;font-kerning:none;letter-spacing:0.000px;transform:scaleX(0.9596);transform-origin:0 0;-webkit-text-stroke:0.45px #000;">Requirements:</span>
<span style="position:absolute;left:725.64px;top:827.58px;font:normal 24px/24px 'Liberation Sans', sans-serif;color:#000;white-space:pre;font-kerning:none;letter-spacing:0.000px;transform:scaleX(1.0969);transform-origin:0 0;">My</span>
<span style="position:absolute;left:767.50px;top:827.58px;font:normal 24px/24px 'Liberation Sans', sans-serif;color:#000;white-space:pre;font-kerning:none;letter-spacing:0.044px;transform:scaleX(1.1400);transform-origin:0 0;">digital</span>
<span style="position:absolute;left:845.80px;top:827.58px;font:normal 24px/24px 'Liberation Sans', sans-serif;color:#000;white-space:pre;font-kerning:none;letter-spacing:-0.000px;transform:scaleX(1.1245);transform-origin:0 0;">portfolio</span>
<span style="position:absolute;left:948.46px;top:827.58px;font:normal 24px/24px 'Liberation Sans', sans-serif;color:#000;white-space:pre;font-kerning:none;letter-spacing:0.000px;transform:scaleX(1.0957);transform-origin:0 0;">needs</span>
<span style="position:absolute;left:1026.59px;top:827.58px;font:normal 24px/24px 'Liberation Sans', sans-serif;color:#000;white-space:pre;font-kerning:none;letter-spacing:1.019px;transform:scaleX(1.1400);transform-origin:0 0;">to</span>
<span style="position:absolute;left:1057.14px;top:827.58px;font:normal 24px/24px 'Liberation Sans', sans-serif;color:#000;white-space:pre;font-kerning:none;letter-spacing:0.257px;transform:scaleX(1.1400);transform-origin:0 0;">meet</span>
<span style="position:absolute;left:1125.59px;top:827.58px;font:normal 24px/24px 'Liberation Sans', sans-serif;color:#000;white-space:pre;font-kerning:none;letter-spacing:0.233px;transform:scaleX(1.1400);transform-origin:0 0;">the</span>
<span style="position:absolute;left:1170.89px;top:827.58px;font:normal 24px/24px 'Liberation Sans', sans-serif;color:#000;white-space:pre;font-kerning:none;letter-spacing:0.000px;transform:scaleX(1.1116);transform-origin:0 0;">following</span>
<span style="position:absolute;left:1281.51px;top:827.58px;font:normal 24px/24px 'Liberation Sans', sans-serif;color:#000;white-space:pre;font-kerning:none;letter-spacing:0.000px;transform:scaleX(1.0826);transform-origin:0 0;">requirements</span>
<span style="position:absolute;left:1439.63px;top:827.58px;font:normal 24px/24px 'Liberation Sans', sans-serif;color:#000;white-space:pre;font-kerning:none;letter-spacing:1.019px;transform:scaleX(1.1400);transform-origin:0 0;">to</span>
<span style="position:absolute;left:1470.23px;top:827.58px;font:normal 24px/24px 'Liberation Sans', sans-serif;color:#000;white-space:pre;font-kerning:none;letter-spacing:1.434px;transform:scaleX(1.1400);transform-origin:0 0;">be</span>
<span style="position:absolute;left:1508.92px;top:827.58px;font:normal 24px/24px 'Liberation Sans', sans-serif;color:#000;white-space:pre;font-kerning:none;letter-spacing:0.000px;transform:scaleX(1.0876);transform-origin:0 0;">suitable</span>
<span style="position:absolute;left:1605.69px;top:827.58px;font:normal 24px/24px 'Liberation Sans', sans-serif;color:#000;white-space:pre;font-kerning:none;letter-spacing:0.000px;transform:scaleX(1.0869);transform-origin:0 0;">for</span>
<span style="position:absolute;left:1642.74px;top:827.58px;font:normal 24px/24px 'Liberation Sans', sans-serif;color:#000;white-space:pre;font-kerning:none;letter-spacing:0.000px;transform:scaleX(0.9186);transform-origin:0 0;">its</span>
<span style="position:absolute;left:1671.80px;top:827.58px;font:normal 24px/24px 'Liberation Sans', sans-serif;color:#000;white-space:pre;font-kerning:none;letter-spacing:0.000px;transform:scaleX(0.9525);transform-origin:0 0;">users.</span>
<span style="position:absolute;left:1740.57px;top:827.58px;font:normal 24px/24px 'Liberation Sans', sans-serif;color:#000;white-space:pre;font-kerning:none;letter-spacing:0.000px;transform:scaleX(0.9835);transform-origin:0 0;">The</span>
<span style="position:absolute;left:726.33px;top:861.48px;font:normal 24px/24px 'Liberation Sans', sans-serif;color:#000;white-space:pre;font-kerning:none;letter-spacing:0.000px;transform:scaleX(1.1002);transform-origin:0 0;">website</span>
<span style="position:absolute;left:822.46px;top:861.48px;font:normal 24px/24px 'Liberation Sans', sans-serif;color:#000;white-space:pre;font-kerning:none;letter-spacing:0.000px;transform:scaleX(1.0957);transform-origin:0 0;">needs</span>
<span style="position:absolute;left:900.59px;top:861.48px;font:normal 24px/24px 'Liberation Sans', sans-serif;color:#000;white-space:pre;font-kerning:none;letter-spacing:1.019px;transform:scaleX(1.1400);transform-origin:0 0;">to</span>
<span style="position:absolute;left:930.94px;top:861.48px;font:normal 24px/24px 'Liberation Sans', sans-serif;color:#000;white-space:pre;font-kerning:none;letter-spacing:0.526px;transform:scaleX(1.1400);transform-origin:0 0;">load</span>
<span style="position:absolute;left:991.13px;top:861.48px;font:normal 24px/24px 'Liberation Sans', sans-serif;color:#000;white-space:pre;font-kerning:none;letter-spacing:0.000px;transform:scaleX(1.0975);transform-origin:0 0;">quickly,</span>
<span style="position:absolute;left:1085.45px;top:861.48px;font:normal 24px/24px 'Liberation Sans', sans-serif;color:#000;white-space:pre;font-kerning:none;letter-spacing:0.000px;transform:scaleX(0.9881);transform-origin:0 0;">this</span>
<span style="position:absolute;left:1129.36px;top:861.48px;font:normal 24px/24px 'Liberation Sans', sans-serif;color:#000;white-space:pre;font-kerning:none;letter-spacing:0.000px;transform:scaleX(0.7833);transform-origin:0 0;">is</span>
<span style="position:absolute;left:1149.69px;top:861.48px;font:normal 24px/24px 'Liberation Sans', sans-serif;color:#000;white-space:pre;font-kerning:none;letter-spacing:1.019px;transform:scaleX(1.1400);transform-origin:0 0;">to</span>
<span style="position:absolute;left:1180.08px;top:861.48px;font:normal 24px/24px 'Liberation Sans', sans-serif;color:#000;white-space:pre;font-kerning:none;letter-spacing:0.000px;transform:scaleX(1.1224);transform-origin:0 0;">improve</span>
<span style="position:absolute;left:1282.66px;top:861.48px;font:normal 24px/24px 'Liberation Sans', sans-serif;color:#000;white-space:pre;font-kerning:none;letter-spacing:0.000px;transform:scaleX(0.9991);transform-origin:0 0;">user</span>
<span style="position:absolute;left:1335.72px;top:861.48px;font:normal 24px/24px 'Liberation Sans', sans-serif;color:#000;white-space:pre;font-kerning:none;letter-spacing:0.000px;transform:scaleX(1.1300);transform-origin:0 0;">experience</span>
<span style="position:absolute;left:1474.84px;top:861.48px;font:normal 24px/24px 'Liberation Sans', sans-serif;color:#000;white-space:pre;font-kerning:none;letter-spacing:0.820px;transform:scaleX(1.1400);transform-origin:0 0;">and</span>
<span style="position:absolute;left:1529.03px;top:861.48px;font:normal 24px/24px 'Liberation Sans', sans-serif;color:#000;white-space:pre;font-kerning:none;letter-spacing:0.000px;transform:scaleX(1.1364);transform-origin:0 0;">make</span>
<span style="position:absolute;left:1602.41px;top:861.48px;font:normal 24px/24px 'Liberation Sans', sans-serif;color:#000;white-space:pre;font-kerning:none;letter-spacing:0.000px;transform:scaleX(0.9968);transform-origin:0 0;">sure</span>
<span style="position:absolute;left:1655.94px;top:861.48px;font:normal 24px/24px 'Liberation Sans', sans-serif;color:#000;white-space:pre;font-kerning:none;letter-spacing:0.000px;transform:scaleX(0.9491);transform-origin:0 0;">users</span>
<span style="position:absolute;left:1718.24px;top:861.48px;font:normal 24px/24px 'Liberation Sans', sans-serif;color:#000;white-space:pre;font-kerning:none;letter-spacing:0.864px;transform:scaleX(1.1400);transform-origin:0 0;">don’t</span>
<span style="position:absolute;left:725.93px;top:895.48px;font:normal 24px/24px 'Liberation Sans', sans-serif;color:#000;white-space:pre;font-kerning:none;letter-spacing:0.700px;transform:scaleX(1.1400);transform-origin:0 0;">decide</span>
<span style="position:absolute;left:817.04px;top:895.48px;font:normal 24px/24px 'Liberation Sans', sans-serif;color:#000;white-space:pre;font-kerning:none;letter-spacing:0.140px;transform:scaleX(1.1400);transform-origin:0 0;">not</span>
<span style="position:absolute;left:862.15px;top:895.48px;font:normal 24px/24px 'Liberation Sans', sans-serif;color:#000;white-space:pre;font-kerning:none;letter-spacing:1.019px;transform:scaleX(1.1400);transform-origin:0 0;">to</span>
<span style="position:absolute;left:892.64px;top:895.48px;font:normal 24px/24px 'Liberation Sans', sans-serif;color:#000;white-space:pre;font-kerning:none;letter-spacing:1.383px;transform:scaleX(1.1400);transform-origin:0 0;">go</span>
<span style="position:absolute;left:931.16px;top:895.48px;font:normal 24px/24px 'Liberation Sans', sans-serif;color:#000;white-space:pre;font-kerning:none;letter-spacing:0.000px;transform:scaleX(1.1389);transform-origin:0 0;">on</span>
<span style="position:absolute;left:968.31px;top:895.48px;font:normal 24px/24px 'Liberation Sans', sans-serif;color:#000;white-space:pre;font-kerning:none;letter-spacing:0.000px;transform:scaleX(1.0800);transform-origin:0 0;">a</span>
<span style="position:absolute;left:991.22px;top:895.48px;font:normal 24px/24px 'Liberation Sans', sans-serif;color:#000;white-space:pre;font-kerning:none;letter-spacing:0.000px;transform:scaleX(1.1232);transform-origin:0 0;">different</span>
<span style="position:absolute;left:1095.76px;top:895.48px;font:normal 24px/24px 'Liberation Sans', sans-serif;color:#000;white-space:pre;font-kerning:none;letter-spacing:0.000px;transform:scaleX(1.1002);transform-origin:0 0;">website</span>
<span style="position:absolute;left:1191.70px;top:895.48px;font:normal 24px/24px 'Liberation Sans', sans-serif;color:#000;white-space:pre;font-kerning:none;letter-spacing:0.000px;transform:scaleX(1.1030);transform-origin:0 0;">instead</span>
<span style="position:absolute;left:1283.79px;top:895.48px;font:normal 24px/24px 'Liberation Sans', sans-serif;color:#000;white-space:pre;font-kerning:none;letter-spacing:0.000px;transform:scaleX(1.0848);transform-origin:0 0;">or</span>
<span style="position:absolute;left:1313.38px;top:895.48px;font:normal 24px/24px 'Liberation Sans', sans-serif;color:#000;white-space:pre;font-kerning:none;letter-spacing:0.140px;transform:scaleX(1.1400);transform-origin:0 0;">not</span>
<span style="position:absolute;left:1358.41px;top:895.48px;font:normal 24px/24px 'Liberation Sans', sans-serif;color:#000;white-space:pre;font-kerning:none;letter-spacing:-0.000px;transform:scaleX(1.0935);transform-origin:0 0;">look</span>
<span style="position:absolute;left:1413.40px;top:895.48px;font:normal 24px/24px 'Liberation Sans', sans-serif;color:#000;white-space:pre;font-kerning:none;letter-spacing:1.432px;transform:scaleX(1.1400);transform-origin:0 0;">at</span>
<span style="position:absolute;left:1444.69px;top:895.48px;font:normal 24px/24px 'Liberation Sans', sans-serif;color:#000;white-space:pre;font-kerning:none;letter-spacing:0.000px;transform:scaleX(1.1076);transform-origin:0 0;">mine</span>
<span style="position:absolute;left:1508.77px;top:895.48px;font:normal 24px/24px 'Liberation Sans', sans-serif;color:#000;white-space:pre;font-kerning:none;letter-spacing:1.432px;transform:scaleX(1.1400);transform-origin:0 0;">at</span>
<span style="position:absolute;left:1540.02px;top:895.48px;font:normal 24px/24px 'Liberation Sans', sans-serif;color:#000;white-space:pre;font-kerning:none;letter-spacing:0.000px;transform:scaleX(1.0686);transform-origin:0 0;">all.</span>
<span style="position:absolute;left:1579.08px;top:895.48px;font:normal 24px/24px 'Liberation Sans', sans-serif;color:#000;white-space:pre;font-kerning:none;letter-spacing:0.000px;transform:scaleX(0.9835);transform-origin:0 0;">The</span>
<span style="position:absolute;left:1626.76px;top:895.48px;font:normal 24px/24px 'Liberation Sans', sans-serif;color:#000;white-space:pre;font-kerning:none;letter-spacing:0.000px;transform:scaleX(1.1002);transform-origin:0 0;">website</span>
<span style="position:absolute;left:1722.97px;top:895.48px;font:normal 24px/24px 'Liberation Sans', sans-serif;color:#000;white-space:pre;font-kerning:none;letter-spacing:0.000px;transform:scaleX(1.0636);transform-origin:0 0;">should</span>
<span style="position:absolute;left:726.01px;top:929.58px;font:normal 24px/24px 'Liberation Sans', sans-serif;color:#000;white-space:pre;font-kerning:none;letter-spacing:0.000px;transform:scaleX(1.0491);transform-origin:0 0;">also</span>
<span style="position:absolute;left:778.91px;top:929.58px;font:normal 24px/24px 'Liberation Sans', sans-serif;color:#000;white-space:pre;font-kerning:none;letter-spacing:1.434px;transform:scaleX(1.1400);transform-origin:0 0;">be</span>
<span style="position:absolute;left:817.62px;top:929.58px;font:normal 24px/24px 'Liberation Sans', sans-serif;color:#000;white-space:pre;font-kerning:none;letter-spacing:0.000px;transform:scaleX(1.0570);transform-origin:0 0;">simple</span>
<span style="position:absolute;left:897.47px;top:929.58px;font:normal 24px/24px 'Liberation Sans', sans-serif;color:#000;white-space:pre;font-kerning:none;letter-spacing:1.019px;transform:scaleX(1.1400);transform-origin:0 0;">to</span>
<span style="position:absolute;left:928.02px;top:929.58px;font:normal 24px/24px 'Liberation Sans', sans-serif;color:#000;white-space:pre;font-kerning:none;letter-spacing:0.140px;transform:scaleX(1.1400);transform-origin:0 0;">navigate,</span>
<span style="position:absolute;left:1046.68px;top:929.58px;font:normal 24px/24px 'Liberation Sans', sans-serif;color:#000;white-space:pre;font-kerning:none;letter-spacing:0.233px;transform:scaleX(1.1400);transform-origin:0 0;">the</span>
<span style="position:absolute;left:1091.85px;top:929.58px;font:normal 24px/24px 'Liberation Sans', sans-serif;color:#000;white-space:pre;font-kerning:none;letter-spacing:0.000px;transform:scaleX(1.0720);transform-origin:0 0;">reason</span>
<span style="position:absolute;left:1177.33px;top:929.58px;font:normal 24px/24px 'Liberation Sans', sans-serif;color:#000;white-space:pre;font-kerning:none;letter-spacing:0.119px;transform:scaleX(1.1400);transform-origin:0 0;">being</span>
<span style="position:absolute;left:1251.49px;top:929.58px;font:normal 24px/24px 'Liberation Sans', sans-serif;color:#000;white-space:pre;font-kerning:none;letter-spacing:0.140px;transform:scaleX(1.1400);transform-origin:0 0;">not</span>
<span style="position:absolute;left:1296.59px;top:929.58px;font:normal 24px/24px 'Liberation Sans', sans-serif;color:#000;white-space:pre;font-kerning:none;letter-spacing:1.019px;transform:scaleX(1.1400);transform-origin:0 0;">to</span>
<span style="position:absolute;left:1327.10px;top:929.58px;font:normal 24px/24px 'Liberation Sans', sans-serif;color:#000;white-space:pre;font-kerning:none;letter-spacing:0.000px;transform:scaleX(1.1073);transform-origin:0 0;">confuse</span>
<span style="position:absolute;left:1426.67px;top:929.58px;font:normal 24px/24px 'Liberation Sans', sans-serif;color:#000;white-space:pre;font-kerning:none;letter-spacing:0.233px;transform:scaleX(1.1400);transform-origin:0 0;">the</span>
<span style="position:absolute;left:1472.07px;top:929.58px;font:normal 24px/24px 'Liberation Sans', sans-serif;color:#000;white-space:pre;font-kerning:none;letter-spacing:0.000px;transform:scaleX(0.9491);transform-origin:0 0;">users</span>
<span style="position:absolute;left:1534.36px;top:929.58px;font:normal 24px/24px 'Liberation Sans', sans-serif;color:#000;white-space:pre;font-kerning:none;letter-spacing:0.820px;transform:scaleX(1.1400);transform-origin:0 0;">and</span>
<span style="position:absolute;left:1588.51px;top:929.58px;font:normal 24px/24px 'Liberation Sans', sans-serif;color:#000;white-space:pre;font-kerning:none;letter-spacing:1.019px;transform:scaleX(1.1400);transform-origin:0 0;">to</span>
<span style="position:absolute;left:1619.07px;top:929.58px;font:normal 24px/24px 'Liberation Sans', sans-serif;color:#000;white-space:pre;font-kerning:none;letter-spacing:0.000px;transform:scaleX(1.0492);transform-origin:0 0;">ensure</span>
<span style="position:absolute;left:725.98px;top:963.58px;font:normal 24px/24px 'Liberation Sans', sans-serif;color:#000;white-space:pre;font-kerning:none;letter-spacing:0.022px;transform:scaleX(1.1400);transform-origin:0 0;">navigation</span>
<span style="position:absolute;left:857.65px;top:963.58px;font:normal 24px/24px 'Liberation Sans', sans-serif;color:#000;white-space:pre;font-kerning:none;letter-spacing:0.349px;transform:scaleX(1.1400);transform-origin:0 0;">between</span>
<span style="position:absolute;left:970.48px;top:963.58px;font:normal 24px/24px 'Liberation Sans', sans-serif;color:#000;white-space:pre;font-kerning:none;letter-spacing:0.103px;transform:scaleX(1.1400);transform-origin:0 0;">webpages</span>
<span style="position:absolute;left:1102.91px;top:963.58px;font:normal 24px/24px 'Liberation Sans', sans-serif;color:#000;white-space:pre;font-kerning:none;letter-spacing:0.000px;transform:scaleX(0.7833);transform-origin:0 0;">is</span>
<span style="position:absolute;left:1123.34px;top:963.58px;font:normal 24px/24px 'Liberation Sans', sans-serif;color:#000;white-space:pre;font-kerning:none;letter-spacing:0.000px;transform:scaleX(1.0138);transform-origin:0 0;">as</span>
<span style="position:absolute;left:1155.78px;top:963.58px;font:normal 24px/24px 'Liberation Sans', sans-serif;color:#000;white-space:pre;font-kerning:none;letter-spacing:0.000px;transform:scaleX(1.0570);transform-origin:0 0;">simple</span>
<span style="position:absolute;left:1235.73px;top:963.58px;font:normal 24px/24px 'Liberation Sans', sans-serif;color:#000;white-space:pre;font-kerning:none;letter-spacing:0.000px;transform:scaleX(1.0138);transform-origin:0 0;">as</span>
<span style="position:absolute;left:1268.23px;top:963.58px;font:normal 24px/24px 'Liberation Sans', sans-serif;color:#000;white-space:pre;font-kerning:none;letter-spacing:-0.000px;transform:scaleX(1.0433);transform-origin:0 0;">possible.</span>
<span style="position:absolute;left:1373.37px;top:963.58px;font:normal 24px/24px 'Liberation Sans', sans-serif;color:#000;white-space:pre;font-kerning:none;letter-spacing:0.000px;transform:scaleX(0.9835);transform-origin:0 0;">The</span>
<span style="position:absolute;left:1421.05px;top:963.58px;font:normal 24px/24px 'Liberation Sans', sans-serif;color:#000;white-space:pre;font-kerning:none;letter-spacing:0.000px;transform:scaleX(1.1002);transform-origin:0 0;">website</span>
<span style="position:absolute;left:1517.27px;top:963.58px;font:normal 24px/24px 'Liberation Sans', sans-serif;color:#000;white-space:pre;font-kerning:none;letter-spacing:0.000px;transform:scaleX(1.0636);transform-origin:0 0;">should</span>
<span style="position:absolute;left:1599.61px;top:963.58px;font:normal 24px/24px 'Liberation Sans', sans-serif;color:#000;white-space:pre;font-kerning:none;letter-spacing:0.000px;transform:scaleX(1.0722);transform-origin:0 0;">work</span>
<span style="position:absolute;left:1661.20px;top:963.58px;font:normal 24px/24px 'Liberation Sans', sans-serif;color:#000;white-space:pre;font-kerning:none;letter-spacing:0.000px;transform:scaleX(1.0868);transform-origin:0 0;">well</span>
<span style="position:absolute;left:1712.58px;top:963.58px;font:normal 24px/24px 'Liberation Sans', sans-serif;color:#000;white-space:pre;font-kerning:none;letter-spacing:0.820px;transform:scaleX(1.1400);transform-origin:0 0;">and</span>
<span style="position:absolute;left:1766.82px;top:963.58px;font:normal 24px/24px 'Liberation Sans', sans-serif;color:#000;white-space:pre;font-kerning:none;letter-spacing:1.434px;transform:scaleX(1.1400);transform-origin:0 0;">be</span>
<span style="position:absolute;left:726.13px;top:997.38px;font:normal 24px/24px 'Liberation Sans', sans-serif;color:#000;white-space:pre;font-kerning:none;letter-spacing:0.000px;transform:scaleX(1.0570);transform-origin:0 0;">simple</span>
<span style="position:absolute;left:805.99px;top:997.38px;font:normal 24px/24px 'Liberation Sans', sans-serif;color:#000;white-space:pre;font-kerning:none;letter-spacing:1.019px;transform:scaleX(1.1400);transform-origin:0 0;">to</span>
<span style="position:absolute;left:836.53px;top:997.38px;font:normal 24px/24px 'Liberation Sans', sans-serif;color:#000;white-space:pre;font-kerning:none;letter-spacing:0.266px;transform:scaleX(1.1400);transform-origin:0 0;">navigate</span>
<span style="position:absolute;left:948.53px;top:997.38px;font:normal 24px/24px 'Liberation Sans', sans-serif;color:#000;white-space:pre;font-kerning:none;letter-spacing:0.000px;transform:scaleX(1.1389);transform-origin:0 0;">on</span>
<span style="position:absolute;left:985.56px;top:997.38px;font:normal 24px/24px 'Liberation Sans', sans-serif;color:#000;white-space:pre;font-kerning:none;letter-spacing:0.000px;transform:scaleX(1.1232);transform-origin:0 0;">different</span>
<span style="position:absolute;left:1089.73px;top:997.38px;font:normal 24px/24px 'Liberation Sans', sans-serif;color:#000;white-space:pre;font-kerning:none;letter-spacing:0.000px;transform:scaleX(1.1067);transform-origin:0 0;">devices,</span>
<span style="position:absolute;left:1193.59px;top:997.38px;font:normal 24px/24px 'Liberation Sans', sans-serif;color:#000;white-space:pre;font-kerning:none;letter-spacing:0.233px;transform:scaleX(1.1400);transform-origin:0 0;">the</span>
<span style="position:absolute;left:1238.76px;top:997.38px;font:normal 24px/24px 'Liberation Sans', sans-serif;color:#000;white-space:pre;font-kerning:none;letter-spacing:0.000px;transform:scaleX(1.0720);transform-origin:0 0;">reason</span>
<span style="position:absolute;left:1324.43px;top:997.38px;font:normal 24px/24px 'Liberation Sans', sans-serif;color:#000;white-space:pre;font-kerning:none;letter-spacing:0.000px;transform:scaleX(1.0869);transform-origin:0 0;">for</span>
<span style="position:absolute;left:1361.33px;top:997.38px;font:normal 24px/24px 'Liberation Sans', sans-serif;color:#000;white-space:pre;font-kerning:none;letter-spacing:0.000px;transform:scaleX(0.9881);transform-origin:0 0;">this</span>
<span style="position:absolute;left:1405.24px;top:997.38px;font:normal 24px/24px 'Liberation Sans', sans-serif;color:#000;white-space:pre;font-kerning:none;letter-spacing:0.000px;transform:scaleX(0.7833);transform-origin:0 0;">is</span>
<span style="position:absolute;left:1425.57px;top:997.38px;font:normal 24px/24px 'Liberation Sans', sans-serif;color:#000;white-space:pre;font-kerning:none;letter-spacing:1.019px;transform:scaleX(1.1400);transform-origin:0 0;">to</span>
<span style="position:absolute;left:1455.96px;top:997.38px;font:normal 24px/24px 'Liberation Sans', sans-serif;color:#000;white-space:pre;font-kerning:none;letter-spacing:0.000px;transform:scaleX(1.1224);transform-origin:0 0;">improve</span>
<span style="position:absolute;left:1558.62px;top:997.38px;font:normal 24px/24px 'Liberation Sans', sans-serif;color:#000;white-space:pre;font-kerning:none;letter-spacing:0.000px;transform:scaleX(1.1002);transform-origin:0 0;">website</span>
<span style="position:absolute;left:1654.68px;top:997.38px;font:normal 24px/24px 'Liberation Sans', sans-serif;color:#000;white-space:pre;font-kerning:none;letter-spacing:0.000px;transform:scaleX(1.0783);transform-origin:0 0;">accessibility</span>
<span style="position:absolute;left:726.04px;top:1031.58px;font:normal 24px/24px 'Liberation Sans', sans-serif;color:#000;white-space:pre;font-kerning:none;letter-spacing:0.099px;transform:scaleX(1.1400);transform-origin:0 0;">by</span>
<span style="position:absolute;left:761.82px;top:1031.58px;font:normal 24px/24px 'Liberation Sans', sans-serif;color:#000;white-space:pre;font-kerning:none;letter-spacing:0.000px;transform:scaleX(1.1214);transform-origin:0 0;">allowing</span>
<span style="position:absolute;left:866.10px;top:1031.58px;font:normal 24px/24px 'Liberation Sans', sans-serif;color:#000;white-space:pre;font-kerning:none;letter-spacing:0.000px;transform:scaleX(0.9491);transform-origin:0 0;">users</span>
<span style="position:absolute;left:928.79px;top:1031.58px;font:normal 24px/24px 'Liberation Sans', sans-serif;color:#000;white-space:pre;font-kerning:none;letter-spacing:0.000px;transform:scaleX(1.1039);transform-origin:0 0;">with</span>
<span style="position:absolute;left:982.58px;top:1031.58px;font:normal 24px/24px 'Liberation Sans', sans-serif;color:#000;white-space:pre;font-kerning:none;letter-spacing:0.000px;transform:scaleX(1.1232);transform-origin:0 0;">different</span>
<span style="position:absolute;left:1086.75px;top:1031.58px;font:normal 24px/24px 'Liberation Sans', sans-serif;color:#000;white-space:pre;font-kerning:none;letter-spacing:0.000px;transform:scaleX(1.1152);transform-origin:0 0;">devices</span>
<span style="position:absolute;left:1183.96px;top:1031.58px;font:normal 24px/24px 'Liberation Sans', sans-serif;color:#000;white-space:pre;font-kerning:none;letter-spacing:1.019px;transform:scaleX(1.1400);transform-origin:0 0;">to</span>
<span style="position:absolute;left:1214.48px;top:1031.58px;font:normal 24px/24px 'Liberation Sans', sans-serif;color:#000;white-space:pre;font-kerning:none;letter-spacing:0.000px;transform:scaleX(1.0954);transform-origin:0 0;">access</span>
<span style="position:absolute;left:1302.76px;top:1031.58px;font:normal 24px/24px 'Liberation Sans', sans-serif;color:#000;white-space:pre;font-kerning:none;letter-spacing:0.820px;transform:scaleX(1.1400);transform-origin:0 0;">and</span>
<span style="position:absolute;left:1357.18px;top:1031.58px;font:normal 24px/24px 'Liberation Sans', sans-serif;color:#000;white-space:pre;font-kerning:none;letter-spacing:0.000px;transform:scaleX(1.0154);transform-origin:0 0;">use</span>
<span style="position:absolute;left:1403.02px;top:1031.58px;font:normal 24px/24px 'Liberation Sans', sans-serif;color:#000;white-space:pre;font-kerning:none;letter-spacing:0.000px;transform:scaleX(1.0710);transform-origin:0 0;">it</span>
<span style="position:absolute;left:1422.64px;top:1031.58px;font:normal 24px/24px 'Liberation Sans', sans-serif;color:#000;white-space:pre;font-kerning:none;letter-spacing:-0.000px;transform:scaleX(1.1258);transform-origin:0 0;">other</span>
<span style="position:absolute;left:1490.61px;top:1031.58px;font:normal 24px/24px 'Liberation Sans', sans-serif;color:#000;white-space:pre;font-kerning:none;letter-spacing:0.172px;transform:scaleX(1.1400);transform-origin:0 0;">than</span>
<span style="position:absolute;left:1551.15px;top:1031.58px;font:normal 24px/24px 'Liberation Sans', sans-serif;color:#000;white-space:pre;font-kerning:none;letter-spacing:0.000px;transform:scaleX(1.1097);transform-origin:0 0;">normal</span>
<span style="position:absolute;left:1639.00px;top:1031.58px;font:normal 24px/24px 'Liberation Sans', sans-serif;color:#000;white-space:pre;font-kerning:none;letter-spacing:0.000px;transform:scaleX(1.1113);transform-origin:0 0;">computers.</span>
<span style="position:absolute;left:725.64px;top:1081.35px;font:bold 29px/29px 'Liberation Sans', sans-serif;color:#000;white-space:pre;font-kerning:none;letter-spacing:0.000px;transform:scaleX(0.9581);transform-origin:0 0;-webkit-text-stroke:0.45px #000;">Project</span>
<span style="position:absolute;left:827.29px;top:1081.35px;font:bold 29px/29px 'Liberation Sans', sans-serif;color:#000;white-space:pre;font-kerning:none;letter-spacing:0.000px;transform:scaleX(0.9470);transform-origin:0 0;-webkit-text-stroke:0.45px #000;">Timeline:</span>
<span style="position:absolute;left:738.04px;top:1167.38px;font:bold 24px/24px 'Liberation Sans', sans-serif;color:#000;white-space:pre;font-kerning:none;letter-spacing:0.000px;transform:scaleX(0.9158);transform-origin:0 0;-webkit-text-stroke:0.35px #000;">Task</span>
<span style="position:absolute;left:991.74px;top:1167.38px;font:bold 24px/24px 'Liberation Sans', sans-serif;color:#000;white-space:pre;font-kerning:none;letter-spacing:-0.000px;transform:scaleX(1.0363);transform-origin:0 0;-webkit-text-stroke:0.35px #000;">Expected</span>
<span style="position:absolute;left:1109.23px;top:1167.38px;font:bold 24px/24px 'Liberation Sans', sans-serif;color:#000;white-space:pre;font-kerning:none;letter-spacing:0.000px;transform:scaleX(0.9539);transform-origin:0 0;-webkit-text-stroke:0.35px #000;">Time</span>
<span style="position:absolute;left:1261.86px;top:1167.38px;font:bold 24px/24px 'Liberation Sans', sans-serif;color:#000;white-space:pre;font-kerning:none;letter-spacing:0.000px;transform:scaleX(1.0471);transform-origin:0 0;-webkit-text-stroke:0.35px #000;">Actual</span>
<span style="position:absolute;left:1345.27px;top:1167.38px;font:bold 24px/24px 'Liberation Sans', sans-serif;color:#000;white-space:pre;font-kerning:none;letter-spacing:0.000px;transform:scaleX(0.9539);transform-origin:0 0;-webkit-text-stroke:0.35px #000;">Time</span>
<span style="position:absolute;left:1529.41px;top:1167.38px;font:bold 24px/24px 'Liberation Sans', sans-serif;color:#000;white-space:pre;font-kerning:none;letter-spacing:0.000px;transform:scaleX(1.0550);transform-origin:0 0;-webkit-text-stroke:0.35px #000;">Date</span>
<span style="position:absolute;left:1591.26px;top:1167.38px;font:bold 24px/24px 'Liberation Sans', sans-serif;color:#000;white-space:pre;font-kerning:none;letter-spacing:0.046px;transform:scaleX(1.0600);transform-origin:0 0;-webkit-text-stroke:0.35px #000;">Completed</span>
<span style="position:absolute;left:736.00px;top:1227.68px;font:normal 24px/24px 'Liberation Sans', sans-serif;color:#000;white-space:pre;font-kerning:none;letter-spacing:0.000px;transform:scaleX(1.1169);transform-origin:0 0;">Making</span>
<span style="position:absolute;left:829.46px;top:1227.68px;font:normal 24px/24px 'Liberation Sans', sans-serif;color:#000;white-space:pre;font-kerning:none;letter-spacing:0.000px;transform:scaleX(1.0692);transform-origin:0 0;">wireframes.</span>
<span style="position:absolute;left:992.35px;top:1227.68px;font:normal 24px/24px 'Liberation Sans', sans-serif;color:#000;white-space:pre;font-kerning:none;letter-spacing:0.000px;transform:scaleX(0.9997);transform-origin:0 0;">3</span>
<span style="position:absolute;left:1012.23px;top:1227.68px;font:normal 24px/24px 'Liberation Sans', sans-serif;color:#000;white-space:pre;font-kerning:none;letter-spacing:0.000px;transform:scaleX(1.0874);transform-origin:0 0;">days</span>
<span style="position:absolute;left:1260.10px;top:1227.68px;font:normal 24px/24px 'Liberation Sans', sans-serif;color:#000;white-space:pre;font-kerning:none;letter-spacing:0.000px;transform:scaleX(1.0405);transform-origin:0 0;">2</span>
<span style="position:absolute;left:1280.33px;top:1227.68px;font:normal 24px/24px 'Liberation Sans', sans-serif;color:#000;white-space:pre;font-kerning:none;letter-spacing:0.000px;transform:scaleX(1.0874);transform-origin:0 0;">days</span>
<span style="position:absolute;left:1529.91px;top:1227.68px;font:normal 24px/24px 'Liberation Sans', sans-serif;color:#000;white-space:pre;font-kerning:none;letter-spacing:0.000px;transform:scaleX(1.0348);transform-origin:0 0;">24-Nov-24</span>
<span style="position:absolute;left:736.00px;top:1258.98px;font:normal 24px/24px 'Liberation Sans', sans-serif;color:#000;white-space:pre;font-kerning:none;letter-spacing:0.000px;transform:scaleX(1.1169);transform-origin:0 0;">Making</span>
<span style="position:absolute;left:829.24px;top:1258.98px;font:normal 24px/24px 'Liberation Sans', sans-serif;color:#000;white-space:pre;font-kerning:none;letter-spacing:0.000px;transform:scaleX(1.1010);transform-origin:0 0;">sitemap.</span>
<span style="position:absolute;left:992.33px;top:1258.98px;font:normal 24px/24px 'Liberation Sans', sans-serif;color:#000;white-space:pre;font-kerning:none;letter-spacing:0.000px;transform:scaleX(0.9969);transform-origin:0 0;">0.5</span>
<span style="position:absolute;left:1032.12px;top:1258.98px;font:normal 24px/24px 'Liberation Sans', sans-serif;color:#000;white-space:pre;font-kerning:none;letter-spacing:0.643px;transform:scaleX(1.1400);transform-origin:0 0;">day</span>
<span style="position:absolute;left:1260.43px;top:1258.98px;font:normal 24px/24px 'Liberation Sans', sans-serif;color:#000;white-space:pre;font-kerning:none;letter-spacing:0.000px;transform:scaleX(0.9967);transform-origin:0 0;">0.25</span>
<span style="position:absolute;left:1313.52px;top:1258.98px;font:normal 24px/24px 'Liberation Sans', sans-serif;color:#000;white-space:pre;font-kerning:none;letter-spacing:0.643px;transform:scaleX(1.1400);transform-origin:0 0;">day</span>
<span style="position:absolute;left:1529.91px;top:1258.98px;font:normal 24px/24px 'Liberation Sans', sans-serif;color:#000;white-space:pre;font-kerning:none;letter-spacing:0.000px;transform:scaleX(1.0348);transform-origin:0 0;">26-Nov-24</span>
<span style="position:absolute;left:736.00px;top:1289.28px;font:normal 24px/24px 'Liberation Sans', sans-serif;color:#000;white-space:pre;font-kerning:none;letter-spacing:0.000px;transform:scaleX(1.1169);transform-origin:0 0;">Making</span>
<span style="position:absolute;left:829.18px;top:1289.28px;font:normal 24px/24px 'Liberation Sans', sans-serif;color:#000;white-space:pre;font-kerning:none;letter-spacing:0.000px;transform:scaleX(1.0991);transform-origin:0 0;">mockups.</span>
<span style="position:absolute;left:992.35px;top:1289.28px;font:normal 24px/24px 'Liberation Sans', sans-serif;color:#000;white-space:pre;font-kerning:none;letter-spacing:0.000px;transform:scaleX(0.9997);transform-origin:0 0;">3</span>
<span style="position:absolute;left:1012.23px;top:1289.28px;font:normal 24px/24px 'Liberation Sans', sans-serif;color:#000;white-space:pre;font-kerning:none;letter-spacing:0.000px;transform:scaleX(1.0874);transform-origin:0 0;">days</span>
<span style="position:absolute;left:1260.10px;top:1289.28px;font:normal 24px/24px 'Liberation Sans', sans-serif;color:#000;white-space:pre;font-kerning:none;letter-spacing:0.000px;transform:scaleX(1.0405);transform-origin:0 0;">2</span>
<span style="position:absolute;left:1280.33px;top:1289.28px;font:normal 24px/24px 'Liberation Sans', sans-serif;color:#000;white-space:pre;font-kerning:none;letter-spacing:0.000px;transform:scaleX(1.0874);transform-origin:0 0;">days</span>
<span style="position:absolute;left:1529.20px;top:1289.28px;font:normal 24px/24px 'Liberation Sans', sans-serif;color:#000;white-space:pre;font-kerning:none;letter-spacing:0.000px;transform:scaleX(1.0698);transform-origin:0 0;">1-Dec-24</span>
<span style="position:absolute;left:736.12px;top:1321.38px;font:normal 24px/24px 'Liberation Sans', sans-serif;color:#000;white-space:pre;font-kerning:none;letter-spacing:0.000px;transform:scaleX(1.1265);transform-origin:0 0;">Gathering</span>
<span style="position:absolute;left:861.64px;top:1321.38px;font:normal 24px/24px 'Liberation Sans', sans-serif;color:#000;white-space:pre;font-kerning:none;letter-spacing:0.000px;transform:scaleX(0.9808);transform-origin:0 0;">assets.</span>
<span style="position:absolute;left:991.98px;top:1321.38px;font:normal 24px/24px 'Liberation Sans', sans-serif;color:#000;white-space:pre;font-kerning:none;letter-spacing:0.000px;transform:scaleX(1.0427);transform-origin:0 0;">7</span>
<span style="position:absolute;left:1012.23px;top:1321.38px;font:normal 24px/24px 'Liberation Sans', sans-serif;color:#000;white-space:pre;font-kerning:none;letter-spacing:0.000px;transform:scaleX(1.0874);transform-origin:0 0;">days</span>
<span style="position:absolute;left:1260.40px;top:1321.38px;font:normal 24px/24px 'Liberation Sans', sans-serif;color:#000;white-space:pre;font-kerning:none;letter-spacing:0.000px;transform:scaleX(0.9997);transform-origin:0 0;">5</span>
<span style="position:absolute;left:1280.33px;top:1321.38px;font:normal 24px/24px 'Liberation Sans', sans-serif;color:#000;white-space:pre;font-kerning:none;letter-spacing:0.000px;transform:scaleX(1.0874);transform-origin:0 0;">days</span>
<span style="position:absolute;left:1529.91px;top:1321.38px;font:normal 24px/24px 'Liberation Sans', sans-serif;color:#000;white-space:pre;font-kerning:none;letter-spacing:0.000px;transform:scaleX(1.0348);transform-origin:0 0;">28-Nov-24</span>
<span style="position:absolute;left:736.00px;top:1351.58px;font:normal 24px/24px 'Liberation Sans', sans-serif;color:#000;white-space:pre;font-kerning:none;letter-spacing:0.000px;transform:scaleX(1.1169);transform-origin:0 0;">Making</span>
<span style="position:absolute;left:829.22px;top:1351.58px;font:normal 24px/24px 'Liberation Sans', sans-serif;color:#000;white-space:pre;font-kerning:none;letter-spacing:0.000px;transform:scaleX(0.9803);transform-origin:0 0;">assets</span>
<span style="position:absolute;left:903.98px;top:1351.58px;font:normal 24px/24px 'Liberation Sans', sans-serif;color:#000;white-space:pre;font-kerning:none;letter-spacing:0.000px;transform:scaleX(0.9275);transform-origin:0 0;">list.</span>
<span style="position:absolute;left:992.00px;top:1351.58px;font:normal 24px/24px 'Liberation Sans', sans-serif;color:#000;white-space:pre;font-kerning:none;letter-spacing:0.000px;transform:scaleX(1.0405);transform-origin:0 0;">2</span>
<span style="position:absolute;left:1012.23px;top:1351.58px;font:normal 24px/24px 'Liberation Sans', sans-serif;color:#000;white-space:pre;font-kerning:none;letter-spacing:0.000px;transform:scaleX(1.0874);transform-origin:0 0;">days</span>
<span style="position:absolute;left:1259.49px;top:1351.58px;font:normal 24px/24px 'Liberation Sans', sans-serif;color:#000;white-space:pre;font-kerning:none;letter-spacing:0.000px;transform:scaleX(1.0800);transform-origin:0 0;">1</span>
<span style="position:absolute;left:1280.28px;top:1351.58px;font:normal 24px/24px 'Liberation Sans', sans-serif;color:#000;white-space:pre;font-kerning:none;letter-spacing:0.643px;transform:scaleX(1.1400);transform-origin:0 0;">day</span>
<span style="position:absolute;left:1529.91px;top:1351.58px;font:normal 24px/24px 'Liberation Sans', sans-serif;color:#000;white-space:pre;font-kerning:none;letter-spacing:0.000px;transform:scaleX(1.0389);transform-origin:0 0;">29-Nov-29</span>
<span style="position:absolute;left:736.00px;top:1383.38px;font:normal 24px/24px 'Liberation Sans', sans-serif;color:#000;white-space:pre;font-kerning:none;letter-spacing:0.000px;transform:scaleX(1.1169);transform-origin:0 0;">Making</span>
<span style="position:absolute;left:829.11px;top:1383.38px;font:normal 24px/24px 'Liberation Sans', sans-serif;color:#000;white-space:pre;font-kerning:none;letter-spacing:0.000px;transform:scaleX(1.0608);transform-origin:0 0;">test</span>
<span style="position:absolute;left:877.10px;top:1383.38px;font:normal 24px/24px 'Liberation Sans', sans-serif;color:#000;white-space:pre;font-kerning:none;letter-spacing:0.000px;transform:scaleX(0.9275);transform-origin:0 0;">list.</span>
<span style="position:absolute;left:991.39px;top:1383.38px;font:normal 24px/24px 'Liberation Sans', sans-serif;color:#000;white-space:pre;font-kerning:none;letter-spacing:0.000px;transform:scaleX(1.0800);transform-origin:0 0;">1</span>
<span style="position:absolute;left:1012.18px;top:1383.38px;font:normal 24px/24px 'Liberation Sans', sans-serif;color:#000;white-space:pre;font-kerning:none;letter-spacing:0.643px;transform:scaleX(1.1400);transform-origin:0 0;">day</span>
<span style="position:absolute;left:1259.49px;top:1383.38px;font:normal 24px/24px 'Liberation Sans', sans-serif;color:#000;white-space:pre;font-kerning:none;letter-spacing:0.000px;transform:scaleX(1.0800);transform-origin:0 0;">1</span>
<span style="position:absolute;left:1280.28px;top:1383.38px;font:normal 24px/24px 'Liberation Sans', sans-serif;color:#000;white-space:pre;font-kerning:none;letter-spacing:0.643px;transform:scaleX(1.1400);transform-origin:0 0;">day</span>
<span style="position:absolute;left:1529.91px;top:1383.38px;font:normal 24px/24px 'Liberation Sans', sans-serif;color:#000;white-space:pre;font-kerning:none;letter-spacing:0.000px;transform:scaleX(1.0348);transform-origin:0 0;">26-Nov-24</span>
<span style="position:absolute;left:736.09px;top:1413.28px;font:normal 24px/24px 'Liberation Sans', sans-serif;color:#000;white-space:pre;font-kerning:none;letter-spacing:0.146px;transform:scaleX(1.1400);transform-origin:0 0;">Coding</span>
<span style="position:absolute;left:830.30px;top:1413.28px;font:normal 24px/24px 'Liberation Sans', sans-serif;color:#000;white-space:pre;font-kerning:none;letter-spacing:0.000px;transform:scaleX(0.9225);transform-origin:0 0;">HTML</span>
<span style="position:absolute;left:896.99px;top:1413.28px;font:normal 24px/24px 'Liberation Sans', sans-serif;color:#000;white-space:pre;font-kerning:none;letter-spacing:0.000px;transform:scaleX(0.9792);transform-origin:0 0;">files</span>
<span style="position:absolute;left:992.30px;top:1413.28px;font:normal 24px/24px 'Liberation Sans', sans-serif;color:#000;white-space:pre;font-kerning:none;letter-spacing:0.000px;transform:scaleX(0.9997);transform-origin:0 0;">5</span>
<span style="position:absolute;left:1012.23px;top:1413.28px;font:normal 24px/24px 'Liberation Sans', sans-serif;color:#000;white-space:pre;font-kerning:none;letter-spacing:0.000px;transform:scaleX(1.0874);transform-origin:0 0;">days</span>
<span style="position:absolute;left:736.32px;top:1443.18px;font:normal 24px/24px 'Liberation Sans', sans-serif;color:#000;white-space:pre;font-kerning:none;letter-spacing:0.820px;transform:scaleX(1.1400);transform-origin:0 0;">and</span>
<span style="position:absolute;left:790.44px;top:1443.18px;font:normal 24px/24px 'Liberation Sans', sans-serif;color:#000;white-space:pre;font-kerning:none;letter-spacing:0.482px;transform:scaleX(1.1400);transform-origin:0 0;">adding</span>
<span style="position:absolute;left:881.94px;top:1443.18px;font:normal 24px/24px 'Liberation Sans', sans-serif;color:#000;white-space:pre;font-kerning:none;letter-spacing:0.000px;transform:scaleX(1.0742);transform-origin:0 0;">icons</span>
<span style="position:absolute;left:736.63px;top:1471.38px;font:normal 24px/24px 'Liberation Sans', sans-serif;color:#000;white-space:pre;font-kerning:none;letter-spacing:0.000px;transform:scaleX(1.0980);transform-origin:0 0;">from</span>
<span style="position:absolute;left:796.25px;top:1471.38px;font:normal 24px/24px 'Liberation Sans', sans-serif;color:#000;white-space:pre;font-kerning:none;letter-spacing:0.007px;transform:scaleX(1.1400);transform-origin:0 0;">font</span>
<span style="position:absolute;left:736.34px;top:1501.48px;font:normal 24px/24px 'Liberation Sans', sans-serif;color:#000;white-space:pre;font-kerning:none;letter-spacing:-0.000px;transform:scaleX(1.1155);transform-origin:0 0;">awesome.</span>
<span style="position:absolute;left:736.09px;top:1531.48px;font:normal 24px/24px 'Liberation Sans', sans-serif;color:#000;white-space:pre;font-kerning:none;letter-spacing:0.146px;transform:scaleX(1.1400);transform-origin:0 0;">Coding</span>
<span style="position:absolute;left:829.98px;top:1531.48px;font:normal 24px/24px 'Liberation Sans', sans-serif;color:#000;white-space:pre;font-kerning:none;letter-spacing:0.000px;transform:scaleX(1.0817);transform-origin:0 0;">Bootstrap</span>
<span style="position:absolute;left:992.35px;top:1531.48px;font:normal 24px/24px 'Liberation Sans', sans-serif;color:#000;white-space:pre;font-kerning:none;letter-spacing:0.000px;transform:scaleX(0.9997);transform-origin:0 0;">3</span>
<span style="position:absolute;left:1012.23px;top:1531.48px;font:normal 24px/24px 'Liberation Sans', sans-serif;color:#000;white-space:pre;font-kerning:none;letter-spacing:0.000px;transform:scaleX(1.0874);transform-origin:0 0;">days</span>
<span style="position:absolute;left:736.62px;top:1560.68px;font:normal 24px/24px 'Liberation Sans', sans-serif;color:#000;white-space:pre;font-kerning:none;letter-spacing:0.000px;transform:scaleX(1.1042);transform-origin:0 0;">framework</span>
<span style="position:absolute;left:867.07px;top:1560.68px;font:normal 24px/24px 'Liberation Sans', sans-serif;color:#000;white-space:pre;font-kerning:none;letter-spacing:0.000px;transform:scaleX(1.1248);transform-origin:0 0;">into</span>
<div style="position:absolute;left:0;top:1579px;width:2560px;height:29px;background:linear-gradient(#ececec,#f9f9f9 2px,#fafafa)"></div>
<div style="position:absolute;left:0;top:1608px;width:2560px;height:2px;background:#c4c4c4"></div>
<div style="position:absolute;left:0;top:1610px;width:2560px;height:54px;background:#f6f6f6"></div>
<div style="position:absolute;left:1856px;top:1613.9px;width:62px;height:43.8px;border-radius:6px;background:#bababa"></div>
<div style="position:absolute;left:2184px;top:1632.8px;width:200px;height:8.2px;border-radius:4.1px;background:#ababab"></div>
<div style="position:absolute;left:2268px;top:1620px;width:32px;height:32px;border-radius:16px;background:#fff;box-shadow:0 0.5px 2.5px rgba(0,0,0,0.30)"></div>
<svg class="ov" width="2560" height="1664" viewBox="0 0 2560 1664">
<path d="M412 1621.4 H420.6 L429 1629.8 V1647 Q429 1650.2 425.8 1650.2 H419" fill="none" stroke="#5c5c5c" stroke-width="2" stroke-linejoin="round"/><path d="M407.4 1634 V1624.6 Q407.4 1621.4 410.6 1621.4 H412" fill="none" stroke="#5c5c5c" stroke-width="2"/><path d="M420.4 1621.8 V1630 H428.6" fill="none" stroke="#5c5c5c" stroke-width="2"/><circle cx="409" cy="1645.4" r="9.2" fill="#5c5c5c"/><path d="M405.4 1641.8 L412.6 1649 M412.6 1641.8 L405.4 1649" stroke="#fff" stroke-width="2.2" stroke-linecap="round"/>
<circle cx="791.8" cy="1625" r="3.4" fill="none" stroke="#5c5c5c" stroke-width="2"/><path d="M779.4 1626.6 Q784 1632.6 788.6 1632.4 V1640 Q788.4 1646 784.4 1650 M805 1626 Q800 1632.6 795.2 1632.4 V1636.4 M788.6 1632.4 H795.2" fill="none" stroke="#5c5c5c" stroke-width="2" stroke-linecap="round" stroke-linejoin="round"/><circle cx="780.2" cy="1625.6" r="1.6" fill="none" stroke="#5c5c5c" stroke-width="1.6"/><circle cx="804.4" cy="1625" r="1.6" fill="none" stroke="#5c5c5c" stroke-width="1.6"/><circle cx="783" cy="1650" r="1.6" fill="none" stroke="#5c5c5c" stroke-width="1.6"/><circle cx="799" cy="1645.4" r="9.2" fill="#5c5c5c"/><path d="M799 1640 V1646.6" stroke="#fff" stroke-width="2.4" stroke-linecap="round"/><circle cx="799" cy="1650.2" r="1.4" fill="#fff"/>
<path d="M1727 1624.8 H1737.6 V1635.4 M1714.4 1637 V1647.6 H1725 M1715 1647 L1737 1625.4" fill="none" stroke="#5c5c5c" stroke-width="2.1" stroke-linejoin="miter"/>
<path d="M1877.4 1619.8 H1888.4 L1898 1629.4 V1648.8 Q1898 1652 1894.8 1652 H1877.4 Q1874.2 1652 1874.2 1648.8 V1623 Q1874.2 1619.8 1877.4 1619.8 Z" fill="#444"/><path d="M1888.6 1619.8 V1629.2 H1898 Z" fill="#bababa"/><path d="M1889.6 1621.6 L1896.6 1628.4 H1889.6 Z" fill="#444"/><path d="M1878.4 1638.7 H1893.8 M1878.4 1642.6 H1893.8 M1878.4 1646.4 H1893.8" stroke="#c4c4c4" stroke-width="1.8"/>
<circle cx="1960" cy="1636.2" r="14.8" fill="none" stroke="#5c5c5c" stroke-width="2"/><ellipse cx="1960" cy="1636.2" rx="6.6" ry="14.8" fill="none" stroke="#5c5c5c" stroke-width="2"/><path d="M1960 1621.4 V1651 M1946.8 1630.2 H1973.2 M1946.8 1642.2 H1973.2" fill="none" stroke="#5c5c5c" stroke-width="2"/>
<path d="M2016 1625 H2040 M2016 1634.9 H2047.8 M2016 1644.6 H2038" fill="none" stroke="#5c5c5c" stroke-width="2.1"/>
<path d="M2088 1623 H2106 M2088 1628.6 H2101 M2088 1634.2 H2096" fill="none" stroke="#5c5c5c" stroke-width="1.7"/><path d="M2089.4 1651 L2091.4 1641.4 L2110.6 1622.4 Q2113 1620.2 2115.4 1622.4 L2117.6 1624.6 Q2119.8 1627 2117.6 1629.4 L2098.6 1648.6 Z M2107.6 1625.4 L2114.6 1632.4" fill="none" stroke="#5c5c5c" stroke-width="2" stroke-linejoin="round"/>
<path d="M2154.2 1636.3 H2170" stroke="#5c5c5c" stroke-width="2.1"/><path d="M2398.5 1636.4 H2414 M2406.2 1628.7 V1644.2" stroke="#5c5c5c" stroke-width="2.1"/>
</svg>
<span style="position:absolute;left:46.64px;top:1625.64px;font:normal 23.7px/23.7px 'Liberation Sans', sans-serif;color:#666;white-space:pre;font-kerning:none;letter-spacing:0.000px;transform:scaleX(1.0590);transform-origin:0 0;">Page 1 of 40</span>
<span style="position:absolute;left:229.72px;top:1625.64px;font:normal 23.7px/23.7px 'Liberation Sans', sans-serif;color:#666;white-space:pre;font-kerning:none;letter-spacing:0.040px;transform:scaleX(1.0700);transform-origin:0 0;">2661 words</span>
<span style="position:absolute;left:473.52px;top:1625.64px;font:normal 23.7px/23.7px 'Liberation Sans', sans-serif;color:#666;white-space:pre;font-kerning:none;letter-spacing:0.072px;transform:scaleX(1.0700);transform-origin:0 0;">English (United States)</span>
<span style="position:absolute;left:821.95px;top:1625.64px;font:normal 23.7px/23.7px 'Liberation Sans', sans-serif;color:#666;white-space:pre;font-kerning:none;letter-spacing:0.125px;transform:scaleX(1.0700);transform-origin:0 0;">Accessibility: Investigate</span>
<span style="position:absolute;left:1760.44px;top:1625.64px;font:normal 23.7px/23.7px 'Liberation Sans', sans-serif;color:#666;white-space:pre;font-kerning:none;letter-spacing:-0.000px;transform:scaleX(1.0609);transform-origin:0 0;">Focus</span>
<span style="position:absolute;left:2446.89px;top:1625.64px;font:normal 23.7px/23.7px 'Liberation Sans', sans-serif;color:#666;white-space:pre;font-kerning:none;letter-spacing:0.000px;transform:scaleX(1.0593);transform-origin:0 0;">100%</span>
</div>
</body></html>
